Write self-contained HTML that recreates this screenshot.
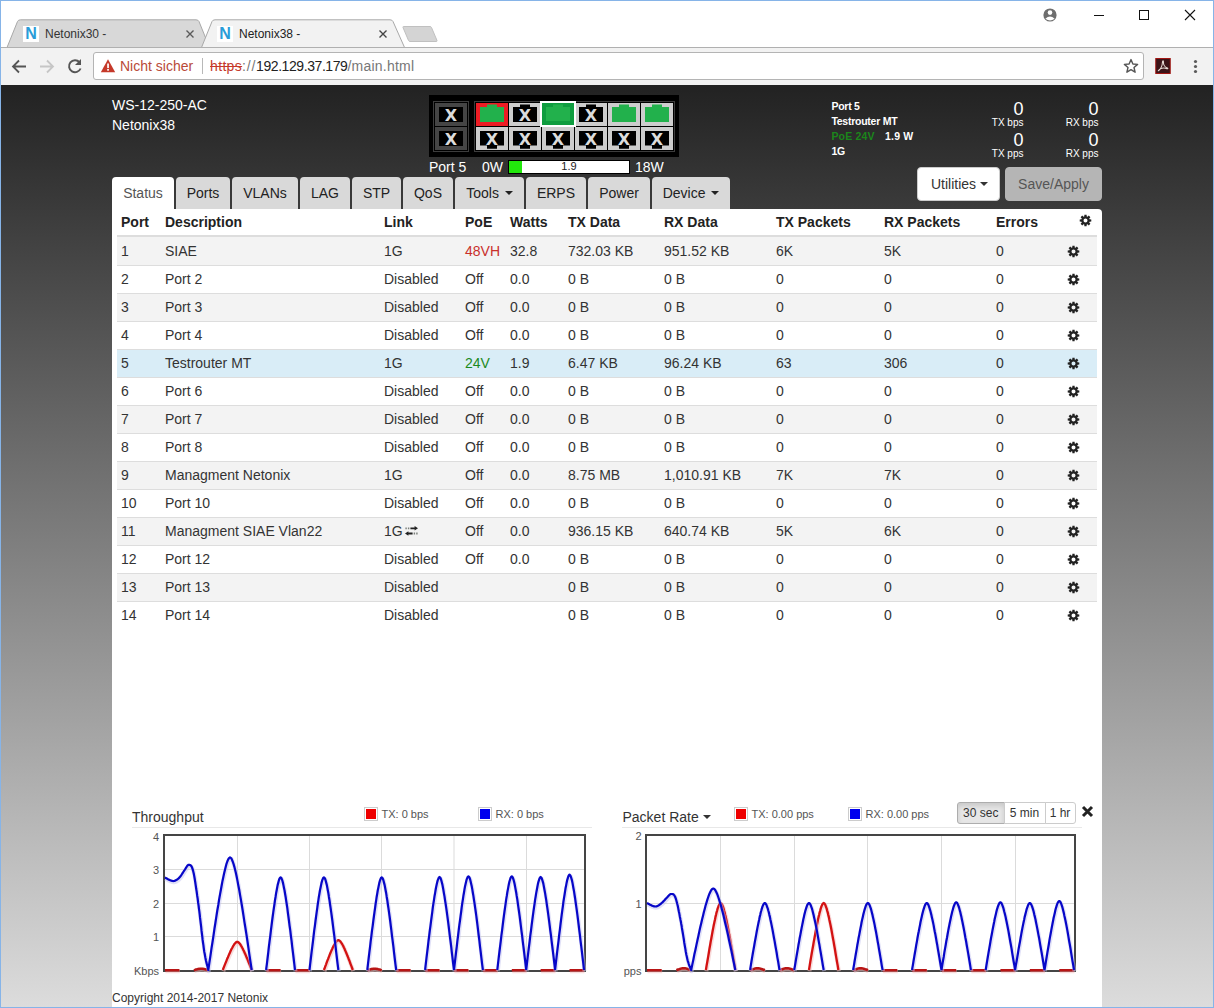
<!DOCTYPE html>
<html lang="de">
<head>
<meta charset="utf-8">
<title>Netonix38 -</title>
<style>
*{box-sizing:border-box}
html,body{margin:0;padding:0}
body{width:1214px;height:1008px;position:relative;overflow:hidden;background:#fff;font-family:"Liberation Sans",Arial,sans-serif;font-size:14px;color:#333}
.abs{position:absolute}
/* window frame */
#frame{position:absolute;left:0;top:0;width:1214px;height:1008px;border:1px solid #86b4e8;pointer-events:none;z-index:50}
/* browser chrome */
#titlebar{position:absolute;left:0;top:0;width:1214px;height:47px;background:#fff}
#toolbar{position:absolute;left:0;top:47px;width:1214px;height:38px;background:#f2f2f2;border-top:1px solid #b0b0b0}
.ctext{font-family:"Liberation Sans",sans-serif;font-size:12px;color:#222;white-space:nowrap}
#urlbox{position:absolute;left:93px;top:4px;width:1051px;height:28px;background:#fff;border:1px solid #b4b4b4;border-radius:3px}
/* page */
#page{position:absolute;left:1px;top:85px;width:1212px;height:922px;background:linear-gradient(to bottom,#222 0%,#dcdcdc 100%);overflow:hidden}
#cont{position:absolute;left:111px;top:123.5px;width:990.3px;height:800px;background:#fff;border-radius:0 4px 0 0}
.hd{color:#fff;white-space:nowrap}
.tab{position:absolute;top:91.6px;height:32.1px;background:#d9d9d9;border-radius:4px 4px 0 0;color:#222;font-size:14px;line-height:33.4px;text-align:center;white-space:nowrap}
.tab.act{background:#fff;color:#555}
.caret{display:inline-block;width:0;height:0;border-left:4px solid transparent;border-right:4px solid transparent;border-top:4px solid currentColor;vertical-align:middle;margin-left:2px;position:relative;top:-1px}
table{border-collapse:separate;border-spacing:0;position:absolute;left:5px;top:0.5px;width:980px;table-layout:fixed}
th,td{padding:0 4px;text-align:left;white-space:nowrap;overflow:visible;font-size:14px}
th{height:28px;line-height:26px;font-weight:bold;border-bottom:2px solid #ddd;vertical-align:top;color:#222}
td{height:28px;line-height:26px;border-top:1px solid #ddd;vertical-align:top;padding-bottom:1px}
tbody tr:first-child td{border-top:0;line-height:28px;padding-bottom:0}
tr.odd td{background:#f3f3f3}
tr.sel td{background:#d9edf7}
.gear{display:block;position:relative}
.num{position:absolute;color:#fff;text-align:right;white-space:nowrap}
.lg{position:absolute;width:14px;height:14px;border:1px solid #ccc;padding:1px;background:#fff}
.lg i{display:block;width:10px;height:10px}
.lgt{position:absolute;font-size:11px;color:#545454;white-space:nowrap;line-height:14px}
.axl{position:absolute;font-size:11px;color:#545454;text-align:right;white-space:nowrap;line-height:14px;width:40px}
.bx{position:absolute;top:717.3px;height:22px;border:1px solid #ccc;background:#fff;font-size:12px;line-height:20px;color:#333;text-align:center}
</style>
</head>
<body>
<!-- ================= BROWSER CHROME ================= -->
<div id="titlebar">
  <svg class="abs" style="left:0;top:0" width="1214" height="48" viewBox="0 0 1214 48">
    <!-- inactive tab -->
    <path d="M7 47.5 L17.5 21.5 Q18.3 19.8 20.5 19.8 L196 19.8 Q198.2 19.8 199 21.5 L209.5 47.5 Z" fill="#d8d8d8" stroke="#a8a8a8" stroke-width="1"/>
    <!-- active tab -->
    <path d="M201.5 47.5 L212 21.5 Q212.8 19.8 215 19.8 L390 19.8 Q392.2 19.8 393 21.5 L405 48.5 L201.5 48.5 Z" fill="#f2f2f2" stroke="#a8a8a8" stroke-width="1"/>
    <rect x="203" y="47" width="201" height="2" fill="#f2f2f2"/>
    <!-- new tab -->
    <path d="M403.5 26.5 L430 26.5 Q431 26.5 431.5 27.5 L437 40.5 Q437.3 41.5 436 41.5 L410 41.5 Q409 41.5 408.5 40.5 L403 27.5 Q402.7 26.5 403.5 26.5 Z" fill="#d4d4d4" stroke="#c0c0c0" stroke-width="1"/>
    <!-- favicons -->
    <rect x="23" y="26" width="16" height="16" fill="#fff"/>
    <rect x="217" y="26" width="16" height="16" fill="#fff"/>
    <!-- tab close x -->
    <path d="M186.5 30.5 L193.5 37.5 M193.5 30.5 L186.5 37.5" stroke="#5a5a5a" stroke-width="1.4" fill="none"/>
    <path d="M379.5 30.5 L386.5 37.5 M386.5 30.5 L379.5 37.5" stroke="#444" stroke-width="1.4" fill="none"/>
    <!-- user icon -->
    <circle cx="1050" cy="15" r="6.6" fill="#6e6e6e"/>
    <circle cx="1050" cy="12.6" r="2.3" fill="#fff"/>
    <path d="M1045.4 18.8 Q1050 14.4 1054.6 18.8 Q1050 22.4 1045.4 18.8 Z" fill="#fff"/>
    <!-- window controls -->
    <path d="M1094 15.5 L1104 15.5" stroke="#111" stroke-width="1"/>
    <rect x="1139.5" y="10.5" width="9" height="9" fill="none" stroke="#111" stroke-width="1"/>
    <path d="M1185 10 L1195 20 M1195 10 L1185 20" stroke="#111" stroke-width="1.1"/>
  </svg>
  <div class="abs" style="left:24px;top:25px;width:14px;font:bold 16px/18px 'Liberation Sans',sans-serif;color:#2a9cd8;text-align:center">N</div>
  <div class="abs" style="left:218px;top:25px;width:14px;font:bold 16px/18px 'Liberation Sans',sans-serif;color:#2a9cd8;text-align:center">N</div>
  <div class="abs ctext" style="left:45px;top:26px;line-height:16px;color:#333">Netonix30 -</div>
  <div class="abs ctext" style="left:239px;top:26px;line-height:16px;color:#222">Netonix38 -</div>
</div>
<div id="toolbar">
  <svg class="abs" style="left:0;top:0" width="94" height="37" viewBox="0 0 94 37">
    <!-- back -->
    <path d="M26 18.5 L13.5 18.5 M19 12.5 L13 18.5 L19 24.5" stroke="#555" stroke-width="1.8" fill="none"/>
    <!-- forward -->
    <path d="M40 18.5 L52.5 18.5 M47 12.5 L53 18.5 L47 24.5" stroke="#c6c6c6" stroke-width="1.8" fill="none"/>
    <!-- reload -->
    <path d="M79.5 14.2 A6 6 0 1 0 80.6 20.5" stroke="#555" stroke-width="1.9" fill="none"/>
    <path d="M81 11 L81 17 L75 17 Z" fill="#555"/>
  </svg>
  <div id="urlbox">
    <svg class="abs" style="left:6px;top:5px" width="16" height="16" viewBox="0 0 16 16"><path d="M8 1.2 L15.2 14.2 L0.8 14.2 Z" fill="#c5392a"/><rect x="7.2" y="5.5" width="1.7" height="4.6" fill="#fff"/><rect x="7.2" y="11" width="1.7" height="1.7" fill="#fff"/></svg>
    <div class="abs" style="left:26px;top:4px;font-size:14px;line-height:18px;color:#b94a38;white-space:nowrap">Nicht sicher</div>
    <div class="abs" style="left:108px;top:5px;width:1px;height:16px;background:#b8b8b8"></div>
    <div class="abs" style="left:116px;top:4px;font-size:14px;line-height:18px;white-space:nowrap;color:#222"><span style="color:#c5392a;text-decoration:line-through;letter-spacing:0.35px">https</span><span style="color:#777;letter-spacing:0.75px">://</span><span style="letter-spacing:-0.42px">192.129.37.179</span><span style="color:#777;letter-spacing:0.22px">/main.html</span></div>
    <svg class="abs" style="left:1029px;top:5px" width="16" height="16" viewBox="0 0 16 16"><path d="M8 1.6 L9.9 6 L14.6 6.4 L11 9.5 L12.1 14.2 L8 11.7 L3.9 14.2 L5 9.5 L1.4 6.4 L6.1 6 Z" fill="none" stroke="#555" stroke-width="1.4" stroke-linejoin="round"/></svg>
  </div>
  <svg class="abs" style="left:1155px;top:10px" width="16" height="16" viewBox="0 0 16 16.6"><rect x="0.5" y="0.5" width="15" height="15.6" fill="#3b1418" stroke="#a3130f" stroke-width="1"/><path d="M3.1 13.2 C5.4 11.6 7.3 7.6 7.5 3.8 C7.6 2.5 8.6 2.6 8.5 4 C8.3 6.6 9.8 9.3 12.5 10.3 C13.4 10.7 12.9 11.5 12 11.1 C10 10.3 7.3 10.3 5.2 11.3 C4.3 11.8 3.7 12.5 3.1 13.2 Z" fill="none" stroke="#e6dad4" stroke-width="1.1" stroke-linejoin="round"/></svg>
  <svg class="abs" style="left:1192px;top:10px" width="8" height="18" viewBox="0 0 8 18"><circle cx="3.5" cy="3.5" r="1.6" fill="#5a5a5a"/><circle cx="3.5" cy="8.5" r="1.6" fill="#5a5a5a"/><circle cx="3.5" cy="13.5" r="1.6" fill="#5a5a5a"/></svg>
</div>
<!-- ================= PAGE ================= -->
<div id="page">
<div class="abs hd" style="left:111px;top:10px;line-height:20px;font-size:14px">WS-12-250-AC<br>Netonix38</div>
<svg class="abs" style="left:428px;top:10px;font-family:DejaVu Sans,Liberation Sans,sans-serif;font-weight:bold;font-size:16px" width="250" height="62" viewBox="0 0 250 62" text-anchor="middle">
<rect x="0" y="0" width="250" height="62" fill="#000"/>
<rect x="4.5" y="6.5" width="35" height="50" fill="none" stroke="#3c3c3c"/>
<rect x="45.5" y="6.5" width="200" height="50" fill="none" stroke="#3c3c3c"/>
<rect x="6" y="8" width="32" height="23" fill="#454545"/>
<rect x="10" y="12" width="24" height="15" fill="#000"/>
<text x="22" y="25.7" fill="#dcdcdc">X</text>
<rect x="6" y="32" width="32" height="23" fill="#454545"/>
<rect x="10" y="36" width="24" height="15" fill="#000"/>
<text x="22" y="49.7" fill="#dcdcdc">X</text>
<rect x="47" y="8" width="32" height="23" fill="#ed1c24"/>
<path d="M51 12 H58 V9.4 H68 V12 H75 V27 H51 Z" fill="#22b14c"/>
<rect x="80" y="8" width="32" height="23" fill="#cdcdcd"/>
<path d="M84 12 H91 V9.4 H101 V12 H108 V27 H84 Z" fill="#000"/>
<text x="96" y="25.7" fill="#dcdcdc">X</text>
<rect x="146" y="8" width="32" height="23" fill="#cdcdcd"/>
<path d="M150 12 H157 V9.4 H167 V12 H174 V27 H150 Z" fill="#000"/>
<text x="162" y="25.7" fill="#dcdcdc">X</text>
<rect x="179" y="8" width="32" height="23" fill="#cdcdcd"/>
<path d="M183 12 H190 V9.4 H200 V12 H207 V27 H183 Z" fill="#22b14c"/>
<rect x="212" y="8" width="32" height="23" fill="#cdcdcd"/>
<path d="M216 12 H223 V9.4 H233 V12 H240 V27 H216 Z" fill="#22b14c"/>
<rect x="47" y="32" width="32" height="23" fill="#cdcdcd"/>
<path d="M51 36 H75 V50.6 H68 V53.8 H58 V50.6 H51 Z" fill="#000"/>
<text x="63" y="49.7" fill="#dcdcdc">X</text>
<rect x="80" y="32" width="32" height="23" fill="#cdcdcd"/>
<path d="M84 36 H108 V50.6 H101 V53.8 H91 V50.6 H84 Z" fill="#000"/>
<text x="96" y="49.7" fill="#dcdcdc">X</text>
<rect x="113" y="32" width="32" height="23" fill="#cdcdcd"/>
<path d="M117 36 H141 V50.6 H134 V53.8 H124 V50.6 H117 Z" fill="#000"/>
<text x="129" y="49.7" fill="#dcdcdc">X</text>
<rect x="146" y="32" width="32" height="23" fill="#cdcdcd"/>
<path d="M150 36 H174 V50.6 H167 V53.8 H157 V50.6 H150 Z" fill="#000"/>
<text x="162" y="49.7" fill="#dcdcdc">X</text>
<rect x="179" y="32" width="32" height="23" fill="#cdcdcd"/>
<path d="M183 36 H207 V50.6 H200 V53.8 H190 V50.6 H183 Z" fill="#000"/>
<text x="195" y="49.7" fill="#dcdcdc">X</text>
<rect x="212" y="32" width="32" height="23" fill="#cdcdcd"/>
<path d="M216 36 H240 V50.6 H233 V53.8 H223 V50.6 H216 Z" fill="#000"/>
<text x="228" y="49.7" fill="#dcdcdc">X</text>
<rect x="111" y="6" width="36" height="26" fill="#fff"/>
<rect x="113" y="8" width="32" height="22" fill="#0f9d3f"/>
<path d="M117 12 H124 V9.6 H134 V12 H141 V26 H117 Z" fill="#22b14c"/>
</svg>
<div class="abs hd" style="left:428px;top:72px;line-height:20px">Port 5</div>
<div class="abs hd" style="left:481px;top:72px;line-height:20px">0W</div>
<div class="abs" style="left:507px;top:75px;width:122px;height:14px;background:#fff;border:1px solid #000"><div class="abs" style="left:0;top:0;width:13px;height:12px;background:#22e80c"></div><div class="abs" style="left:0;top:0;width:120px;text-align:center;font-size:11px;line-height:11px;color:#222">1.9</div></div>
<div class="abs hd" style="left:634px;top:72px;line-height:20px">18W</div>
<div class="abs hd" style="left:830.4px;top:14px;font-size:10.5px;line-height:15px;font-weight:bold;letter-spacing:-0.25px">Port 5<br>Testrouter MT<br><span style="letter-spacing:0.2px"><span style="color:#1b861b">PoE 24V</span><span style="margin-left:10.2px">1.9 W</span></span><br>1G</div>
<div class="num" style="left:942.5px;width:80px;top:13.8px;font-size:18px;line-height:20px">0</div>
<div class="num" style="left:942.5px;width:80px;top:32px;font-size:10px;line-height:12px">TX bps</div>
<div class="num" style="left:942.5px;width:80px;top:44.8px;font-size:18px;line-height:20px">0</div>
<div class="num" style="left:942.5px;width:80px;top:63px;font-size:10px;line-height:12px">TX pps</div>
<div class="num" style="left:1017.5px;width:80px;top:13.8px;font-size:18px;line-height:20px">0</div>
<div class="num" style="left:1017.5px;width:80px;top:32px;font-size:10px;line-height:12px">RX bps</div>
<div class="num" style="left:1017.5px;width:80px;top:44.8px;font-size:18px;line-height:20px">0</div>
<div class="num" style="left:1017.5px;width:80px;top:63px;font-size:10px;line-height:12px">RX pps</div>
<div class="abs" style="left:916px;top:82px;width:83px;height:34px;background:#fff;border:1px solid #ccc;border-radius:4px;text-align:center;line-height:32px;color:#333;font-size:14px;padding-left:2px">Utilities <span class="caret" style="margin-left:0"></span></div>
<div class="abs" style="left:1004px;top:82px;width:97px;height:34px;background:#b5b5b5;border:1px solid #b5b5b5;border-radius:4px;text-align:center;line-height:32px;color:#555;font-size:14px">Save/Apply</div>
<div class="tab act" style="left:111px;width:62px">Status</div>
<div class="tab" style="left:175px;width:54px">Ports</div>
<div class="tab" style="left:231px;width:66px">VLANs</div>
<div class="tab" style="left:299px;width:50px">LAG</div>
<div class="tab" style="left:351px;width:49px">STP</div>
<div class="tab" style="left:402px;width:50px">QoS</div>
<div class="tab" style="left:454px;width:69px">Tools <span class="caret"></span></div>
<div class="tab" style="left:524.8px;width:60.4px">ERPS</div>
<div class="tab" style="left:587px;width:62px">Power</div>
<div class="tab" style="left:651px;width:78px">Device <span class="caret"></span></div>
<div id="cont">
<table><colgroup><col style="width:44px"><col style="width:219px"><col style="width:81px"><col style="width:45px"><col style="width:58px"><col style="width:96px"><col style="width:112px"><col style="width:108px"><col style="width:112px"><col style="width:71px"><col style="width:34px"></colgroup>
<thead><tr><th>Port</th><th>Description</th><th>Link</th><th>PoE</th><th>Watts</th><th>TX Data</th><th>RX Data</th><th>TX Packets</th><th>RX Packets</th><th>Errors</th><th style="padding:0"><svg class="gear" width="13" height="13" viewBox="-6.5 -6.5 13 13" style="left:16.3px;top:5.1px"><path d="M4.01 -1.24 L5.79 -1.11 L5.79 1.11 L4.01 1.24 L3.71 1.96 L4.88 3.31 L3.31 4.88 L1.96 3.71 L1.24 4.01 L1.11 5.79 L-1.11 5.79 L-1.24 4.01 L-1.96 3.71 L-3.31 4.88 L-4.88 3.31 L-3.71 1.96 L-4.01 1.24 L-5.79 1.11 L-5.79 -1.11 L-4.01 -1.24 L-3.71 -1.96 L-4.88 -3.31 L-3.31 -4.88 L-1.96 -3.71 L-1.24 -4.01 L-1.11 -5.79 L1.11 -5.79 L1.24 -4.01 L1.96 -3.71 L3.31 -4.88 L4.88 -3.31 L3.71 -1.96 Z M2.00 0 A2.00 2.00 0 1 0 -2.00 0 A2.00 2.00 0 1 0 2.00 0 Z" fill="#222" fill-rule="evenodd"/></svg></th></tr></thead>
<tbody>
<tr class="odd"><td>1</td><td>SIAE</td><td>1G</td><td><span style="color:#c9302c">48VH</span></td><td>32.8</td><td>732.03 KB</td><td>951.52 KB</td><td>6K</td><td>5K</td><td>0</td><td style="padding:0"><svg class="gear" width="13" height="13" viewBox="-6.5 -6.5 13 13" style="left:3.75px;top:7.5px"><path d="M4.01 -1.24 L5.79 -1.11 L5.79 1.11 L4.01 1.24 L3.71 1.96 L4.88 3.31 L3.31 4.88 L1.96 3.71 L1.24 4.01 L1.11 5.79 L-1.11 5.79 L-1.24 4.01 L-1.96 3.71 L-3.31 4.88 L-4.88 3.31 L-3.71 1.96 L-4.01 1.24 L-5.79 1.11 L-5.79 -1.11 L-4.01 -1.24 L-3.71 -1.96 L-4.88 -3.31 L-3.31 -4.88 L-1.96 -3.71 L-1.24 -4.01 L-1.11 -5.79 L1.11 -5.79 L1.24 -4.01 L1.96 -3.71 L3.31 -4.88 L4.88 -3.31 L3.71 -1.96 Z M2.00 0 A2.00 2.00 0 1 0 -2.00 0 A2.00 2.00 0 1 0 2.00 0 Z" fill="#222" fill-rule="evenodd"/></svg></td></tr>
<tr class=""><td>2</td><td>Port 2</td><td>Disabled</td><td>Off</td><td>0.0</td><td>0 B</td><td>0 B</td><td>0</td><td>0</td><td>0</td><td style="padding:0"><svg class="gear" width="13" height="13" viewBox="-6.5 -6.5 13 13" style="left:3.75px;top:6.5px"><path d="M4.01 -1.24 L5.79 -1.11 L5.79 1.11 L4.01 1.24 L3.71 1.96 L4.88 3.31 L3.31 4.88 L1.96 3.71 L1.24 4.01 L1.11 5.79 L-1.11 5.79 L-1.24 4.01 L-1.96 3.71 L-3.31 4.88 L-4.88 3.31 L-3.71 1.96 L-4.01 1.24 L-5.79 1.11 L-5.79 -1.11 L-4.01 -1.24 L-3.71 -1.96 L-4.88 -3.31 L-3.31 -4.88 L-1.96 -3.71 L-1.24 -4.01 L-1.11 -5.79 L1.11 -5.79 L1.24 -4.01 L1.96 -3.71 L3.31 -4.88 L4.88 -3.31 L3.71 -1.96 Z M2.00 0 A2.00 2.00 0 1 0 -2.00 0 A2.00 2.00 0 1 0 2.00 0 Z" fill="#222" fill-rule="evenodd"/></svg></td></tr>
<tr class="odd"><td>3</td><td>Port 3</td><td>Disabled</td><td>Off</td><td>0.0</td><td>0 B</td><td>0 B</td><td>0</td><td>0</td><td>0</td><td style="padding:0"><svg class="gear" width="13" height="13" viewBox="-6.5 -6.5 13 13" style="left:3.75px;top:6.5px"><path d="M4.01 -1.24 L5.79 -1.11 L5.79 1.11 L4.01 1.24 L3.71 1.96 L4.88 3.31 L3.31 4.88 L1.96 3.71 L1.24 4.01 L1.11 5.79 L-1.11 5.79 L-1.24 4.01 L-1.96 3.71 L-3.31 4.88 L-4.88 3.31 L-3.71 1.96 L-4.01 1.24 L-5.79 1.11 L-5.79 -1.11 L-4.01 -1.24 L-3.71 -1.96 L-4.88 -3.31 L-3.31 -4.88 L-1.96 -3.71 L-1.24 -4.01 L-1.11 -5.79 L1.11 -5.79 L1.24 -4.01 L1.96 -3.71 L3.31 -4.88 L4.88 -3.31 L3.71 -1.96 Z M2.00 0 A2.00 2.00 0 1 0 -2.00 0 A2.00 2.00 0 1 0 2.00 0 Z" fill="#222" fill-rule="evenodd"/></svg></td></tr>
<tr class=""><td>4</td><td>Port 4</td><td>Disabled</td><td>Off</td><td>0.0</td><td>0 B</td><td>0 B</td><td>0</td><td>0</td><td>0</td><td style="padding:0"><svg class="gear" width="13" height="13" viewBox="-6.5 -6.5 13 13" style="left:3.75px;top:6.5px"><path d="M4.01 -1.24 L5.79 -1.11 L5.79 1.11 L4.01 1.24 L3.71 1.96 L4.88 3.31 L3.31 4.88 L1.96 3.71 L1.24 4.01 L1.11 5.79 L-1.11 5.79 L-1.24 4.01 L-1.96 3.71 L-3.31 4.88 L-4.88 3.31 L-3.71 1.96 L-4.01 1.24 L-5.79 1.11 L-5.79 -1.11 L-4.01 -1.24 L-3.71 -1.96 L-4.88 -3.31 L-3.31 -4.88 L-1.96 -3.71 L-1.24 -4.01 L-1.11 -5.79 L1.11 -5.79 L1.24 -4.01 L1.96 -3.71 L3.31 -4.88 L4.88 -3.31 L3.71 -1.96 Z M2.00 0 A2.00 2.00 0 1 0 -2.00 0 A2.00 2.00 0 1 0 2.00 0 Z" fill="#222" fill-rule="evenodd"/></svg></td></tr>
<tr class="sel"><td>5</td><td>Testrouter MT</td><td>1G</td><td><span style="color:#1c8a1c">24V</span></td><td>1.9</td><td>6.47 KB</td><td>96.24 KB</td><td>63</td><td>306</td><td>0</td><td style="padding:0"><svg class="gear" width="13" height="13" viewBox="-6.5 -6.5 13 13" style="left:3.75px;top:6.5px"><path d="M4.01 -1.24 L5.79 -1.11 L5.79 1.11 L4.01 1.24 L3.71 1.96 L4.88 3.31 L3.31 4.88 L1.96 3.71 L1.24 4.01 L1.11 5.79 L-1.11 5.79 L-1.24 4.01 L-1.96 3.71 L-3.31 4.88 L-4.88 3.31 L-3.71 1.96 L-4.01 1.24 L-5.79 1.11 L-5.79 -1.11 L-4.01 -1.24 L-3.71 -1.96 L-4.88 -3.31 L-3.31 -4.88 L-1.96 -3.71 L-1.24 -4.01 L-1.11 -5.79 L1.11 -5.79 L1.24 -4.01 L1.96 -3.71 L3.31 -4.88 L4.88 -3.31 L3.71 -1.96 Z M2.00 0 A2.00 2.00 0 1 0 -2.00 0 A2.00 2.00 0 1 0 2.00 0 Z" fill="#222" fill-rule="evenodd"/></svg></td></tr>
<tr class=""><td>6</td><td>Port 6</td><td>Disabled</td><td>Off</td><td>0.0</td><td>0 B</td><td>0 B</td><td>0</td><td>0</td><td>0</td><td style="padding:0"><svg class="gear" width="13" height="13" viewBox="-6.5 -6.5 13 13" style="left:3.75px;top:6.5px"><path d="M4.01 -1.24 L5.79 -1.11 L5.79 1.11 L4.01 1.24 L3.71 1.96 L4.88 3.31 L3.31 4.88 L1.96 3.71 L1.24 4.01 L1.11 5.79 L-1.11 5.79 L-1.24 4.01 L-1.96 3.71 L-3.31 4.88 L-4.88 3.31 L-3.71 1.96 L-4.01 1.24 L-5.79 1.11 L-5.79 -1.11 L-4.01 -1.24 L-3.71 -1.96 L-4.88 -3.31 L-3.31 -4.88 L-1.96 -3.71 L-1.24 -4.01 L-1.11 -5.79 L1.11 -5.79 L1.24 -4.01 L1.96 -3.71 L3.31 -4.88 L4.88 -3.31 L3.71 -1.96 Z M2.00 0 A2.00 2.00 0 1 0 -2.00 0 A2.00 2.00 0 1 0 2.00 0 Z" fill="#222" fill-rule="evenodd"/></svg></td></tr>
<tr class="odd"><td>7</td><td>Port 7</td><td>Disabled</td><td>Off</td><td>0.0</td><td>0 B</td><td>0 B</td><td>0</td><td>0</td><td>0</td><td style="padding:0"><svg class="gear" width="13" height="13" viewBox="-6.5 -6.5 13 13" style="left:3.75px;top:6.5px"><path d="M4.01 -1.24 L5.79 -1.11 L5.79 1.11 L4.01 1.24 L3.71 1.96 L4.88 3.31 L3.31 4.88 L1.96 3.71 L1.24 4.01 L1.11 5.79 L-1.11 5.79 L-1.24 4.01 L-1.96 3.71 L-3.31 4.88 L-4.88 3.31 L-3.71 1.96 L-4.01 1.24 L-5.79 1.11 L-5.79 -1.11 L-4.01 -1.24 L-3.71 -1.96 L-4.88 -3.31 L-3.31 -4.88 L-1.96 -3.71 L-1.24 -4.01 L-1.11 -5.79 L1.11 -5.79 L1.24 -4.01 L1.96 -3.71 L3.31 -4.88 L4.88 -3.31 L3.71 -1.96 Z M2.00 0 A2.00 2.00 0 1 0 -2.00 0 A2.00 2.00 0 1 0 2.00 0 Z" fill="#222" fill-rule="evenodd"/></svg></td></tr>
<tr class=""><td>8</td><td>Port 8</td><td>Disabled</td><td>Off</td><td>0.0</td><td>0 B</td><td>0 B</td><td>0</td><td>0</td><td>0</td><td style="padding:0"><svg class="gear" width="13" height="13" viewBox="-6.5 -6.5 13 13" style="left:3.75px;top:6.5px"><path d="M4.01 -1.24 L5.79 -1.11 L5.79 1.11 L4.01 1.24 L3.71 1.96 L4.88 3.31 L3.31 4.88 L1.96 3.71 L1.24 4.01 L1.11 5.79 L-1.11 5.79 L-1.24 4.01 L-1.96 3.71 L-3.31 4.88 L-4.88 3.31 L-3.71 1.96 L-4.01 1.24 L-5.79 1.11 L-5.79 -1.11 L-4.01 -1.24 L-3.71 -1.96 L-4.88 -3.31 L-3.31 -4.88 L-1.96 -3.71 L-1.24 -4.01 L-1.11 -5.79 L1.11 -5.79 L1.24 -4.01 L1.96 -3.71 L3.31 -4.88 L4.88 -3.31 L3.71 -1.96 Z M2.00 0 A2.00 2.00 0 1 0 -2.00 0 A2.00 2.00 0 1 0 2.00 0 Z" fill="#222" fill-rule="evenodd"/></svg></td></tr>
<tr class="odd"><td>9</td><td>Managment Netonix</td><td>1G</td><td>Off</td><td>0.0</td><td>8.75 MB</td><td>1,010.91 KB</td><td>7K</td><td>7K</td><td>0</td><td style="padding:0"><svg class="gear" width="13" height="13" viewBox="-6.5 -6.5 13 13" style="left:3.75px;top:6.5px"><path d="M4.01 -1.24 L5.79 -1.11 L5.79 1.11 L4.01 1.24 L3.71 1.96 L4.88 3.31 L3.31 4.88 L1.96 3.71 L1.24 4.01 L1.11 5.79 L-1.11 5.79 L-1.24 4.01 L-1.96 3.71 L-3.31 4.88 L-4.88 3.31 L-3.71 1.96 L-4.01 1.24 L-5.79 1.11 L-5.79 -1.11 L-4.01 -1.24 L-3.71 -1.96 L-4.88 -3.31 L-3.31 -4.88 L-1.96 -3.71 L-1.24 -4.01 L-1.11 -5.79 L1.11 -5.79 L1.24 -4.01 L1.96 -3.71 L3.31 -4.88 L4.88 -3.31 L3.71 -1.96 Z M2.00 0 A2.00 2.00 0 1 0 -2.00 0 A2.00 2.00 0 1 0 2.00 0 Z" fill="#222" fill-rule="evenodd"/></svg></td></tr>
<tr class=""><td>10</td><td>Port 10</td><td>Disabled</td><td>Off</td><td>0.0</td><td>0 B</td><td>0 B</td><td>0</td><td>0</td><td>0</td><td style="padding:0"><svg class="gear" width="13" height="13" viewBox="-6.5 -6.5 13 13" style="left:3.75px;top:6.5px"><path d="M4.01 -1.24 L5.79 -1.11 L5.79 1.11 L4.01 1.24 L3.71 1.96 L4.88 3.31 L3.31 4.88 L1.96 3.71 L1.24 4.01 L1.11 5.79 L-1.11 5.79 L-1.24 4.01 L-1.96 3.71 L-3.31 4.88 L-4.88 3.31 L-3.71 1.96 L-4.01 1.24 L-5.79 1.11 L-5.79 -1.11 L-4.01 -1.24 L-3.71 -1.96 L-4.88 -3.31 L-3.31 -4.88 L-1.96 -3.71 L-1.24 -4.01 L-1.11 -5.79 L1.11 -5.79 L1.24 -4.01 L1.96 -3.71 L3.31 -4.88 L4.88 -3.31 L3.71 -1.96 Z M2.00 0 A2.00 2.00 0 1 0 -2.00 0 A2.00 2.00 0 1 0 2.00 0 Z" fill="#222" fill-rule="evenodd"/></svg></td></tr>
<tr class="odd"><td>11</td><td>Managment SIAE Vlan22</td><td>1G<svg width="13" height="10" viewBox="0 0 13 10" style="display:inline-block;vertical-align:baseline;margin-left:2px;position:relative;top:-0.4px"><path d="M5.4 1.4 H9.6 V0 L13 2.3 L9.6 4.6 V3.2 H5.4 Z M7.6 6.6 H3.4 V5.2 L0 7.5 L3.4 9.8 V8.4 H7.6 Z" fill="#222"/><path d="M0.4 1.4 h1.4 v1.8 h-1.4 Z M2.9 1.4 h1.4 v1.8 h-1.4 Z M8.7 6.6 h1.4 v1.8 h-1.4 Z M11.2 6.6 h1.4 v1.8 h-1.4 Z" fill="#7a7f7a"/></svg></td><td>Off</td><td>0.0</td><td>936.15 KB</td><td>640.74 KB</td><td>5K</td><td>6K</td><td>0</td><td style="padding:0"><svg class="gear" width="13" height="13" viewBox="-6.5 -6.5 13 13" style="left:3.75px;top:6.5px"><path d="M4.01 -1.24 L5.79 -1.11 L5.79 1.11 L4.01 1.24 L3.71 1.96 L4.88 3.31 L3.31 4.88 L1.96 3.71 L1.24 4.01 L1.11 5.79 L-1.11 5.79 L-1.24 4.01 L-1.96 3.71 L-3.31 4.88 L-4.88 3.31 L-3.71 1.96 L-4.01 1.24 L-5.79 1.11 L-5.79 -1.11 L-4.01 -1.24 L-3.71 -1.96 L-4.88 -3.31 L-3.31 -4.88 L-1.96 -3.71 L-1.24 -4.01 L-1.11 -5.79 L1.11 -5.79 L1.24 -4.01 L1.96 -3.71 L3.31 -4.88 L4.88 -3.31 L3.71 -1.96 Z M2.00 0 A2.00 2.00 0 1 0 -2.00 0 A2.00 2.00 0 1 0 2.00 0 Z" fill="#222" fill-rule="evenodd"/></svg></td></tr>
<tr class=""><td>12</td><td>Port 12</td><td>Disabled</td><td>Off</td><td>0.0</td><td>0 B</td><td>0 B</td><td>0</td><td>0</td><td>0</td><td style="padding:0"><svg class="gear" width="13" height="13" viewBox="-6.5 -6.5 13 13" style="left:3.75px;top:6.5px"><path d="M4.01 -1.24 L5.79 -1.11 L5.79 1.11 L4.01 1.24 L3.71 1.96 L4.88 3.31 L3.31 4.88 L1.96 3.71 L1.24 4.01 L1.11 5.79 L-1.11 5.79 L-1.24 4.01 L-1.96 3.71 L-3.31 4.88 L-4.88 3.31 L-3.71 1.96 L-4.01 1.24 L-5.79 1.11 L-5.79 -1.11 L-4.01 -1.24 L-3.71 -1.96 L-4.88 -3.31 L-3.31 -4.88 L-1.96 -3.71 L-1.24 -4.01 L-1.11 -5.79 L1.11 -5.79 L1.24 -4.01 L1.96 -3.71 L3.31 -4.88 L4.88 -3.31 L3.71 -1.96 Z M2.00 0 A2.00 2.00 0 1 0 -2.00 0 A2.00 2.00 0 1 0 2.00 0 Z" fill="#222" fill-rule="evenodd"/></svg></td></tr>
<tr class="odd"><td>13</td><td>Port 13</td><td>Disabled</td><td></td><td></td><td>0 B</td><td>0 B</td><td>0</td><td>0</td><td>0</td><td style="padding:0"><svg class="gear" width="13" height="13" viewBox="-6.5 -6.5 13 13" style="left:3.75px;top:6.5px"><path d="M4.01 -1.24 L5.79 -1.11 L5.79 1.11 L4.01 1.24 L3.71 1.96 L4.88 3.31 L3.31 4.88 L1.96 3.71 L1.24 4.01 L1.11 5.79 L-1.11 5.79 L-1.24 4.01 L-1.96 3.71 L-3.31 4.88 L-4.88 3.31 L-3.71 1.96 L-4.01 1.24 L-5.79 1.11 L-5.79 -1.11 L-4.01 -1.24 L-3.71 -1.96 L-4.88 -3.31 L-3.31 -4.88 L-1.96 -3.71 L-1.24 -4.01 L-1.11 -5.79 L1.11 -5.79 L1.24 -4.01 L1.96 -3.71 L3.31 -4.88 L4.88 -3.31 L3.71 -1.96 Z M2.00 0 A2.00 2.00 0 1 0 -2.00 0 A2.00 2.00 0 1 0 2.00 0 Z" fill="#222" fill-rule="evenodd"/></svg></td></tr>
<tr class=""><td>14</td><td>Port 14</td><td>Disabled</td><td></td><td></td><td>0 B</td><td>0 B</td><td>0</td><td>0</td><td>0</td><td style="padding:0"><svg class="gear" width="13" height="13" viewBox="-6.5 -6.5 13 13" style="left:3.75px;top:6.5px"><path d="M4.01 -1.24 L5.79 -1.11 L5.79 1.11 L4.01 1.24 L3.71 1.96 L4.88 3.31 L3.31 4.88 L1.96 3.71 L1.24 4.01 L1.11 5.79 L-1.11 5.79 L-1.24 4.01 L-1.96 3.71 L-3.31 4.88 L-4.88 3.31 L-3.71 1.96 L-4.01 1.24 L-5.79 1.11 L-5.79 -1.11 L-4.01 -1.24 L-3.71 -1.96 L-4.88 -3.31 L-3.31 -4.88 L-1.96 -3.71 L-1.24 -4.01 L-1.11 -5.79 L1.11 -5.79 L1.24 -4.01 L1.96 -3.71 L3.31 -4.88 L4.88 -3.31 L3.71 -1.96 Z M2.00 0 A2.00 2.00 0 1 0 -2.00 0 A2.00 2.00 0 1 0 2.00 0 Z" fill="#222" fill-rule="evenodd"/></svg></td></tr>
</tbody></table>
</div>
<div class="abs" style="left:131px;top:722px;font-size:14px;line-height:20px;color:#333">Throughput</div>
<div class="abs" style="left:131px;top:742px;width:460px;height:1px;background:#e8e8e8"></div>
<div class="lg" style="left:363px;top:722px"><i style="background:#ee0000"></i></div><div class="lgt" style="left:380.5px;top:722px">TX: 0 bps</div>
<div class="lg" style="left:477px;top:722px"><i style="background:#0000ee"></i></div><div class="lgt" style="left:494.5px;top:722px">RX: 0 bps</div>
<div class="axl" style="left:118px;top:744.6px">4</div>
<div class="axl" style="left:118px;top:778px">3</div>
<div class="axl" style="left:118px;top:811.5px">2</div>
<div class="axl" style="left:118px;top:845px">1</div>
<div class="axl" style="left:118px;top:878.5px">Kbps</div>
<svg class="abs" style="left:159px;top:745px" width="440" height="150" viewBox="0 0 440 150">
<line x1="77.5" y1="6" x2="77.5" y2="140" stroke="#dbdbdb" stroke-width="1"/>
<line x1="149.5" y1="6" x2="149.5" y2="140" stroke="#dbdbdb" stroke-width="1"/>
<line x1="221.5" y1="6" x2="221.5" y2="140" stroke="#dbdbdb" stroke-width="1"/>
<line x1="294.0" y1="6" x2="294.0" y2="140" stroke="#dbdbdb" stroke-width="1"/>
<line x1="366.5" y1="6" x2="366.5" y2="140" stroke="#dbdbdb" stroke-width="1"/>
<line x1="5" y1="106.5" x2="424" y2="106.5" stroke="#dbdbdb" stroke-width="1"/>
<line x1="5" y1="73.5" x2="424" y2="73.5" stroke="#dbdbdb" stroke-width="1"/>
<line x1="5" y1="39.5" x2="424" y2="39.5" stroke="#dbdbdb" stroke-width="1"/>
<rect x="4" y="5" width="421" height="136" fill="none" stroke="#454545" stroke-width="2"/>
<path d="M5.0 140.0 L19.4 140.0 M106.1 140.0 L120.6 140.0 M135.0 140.0 L149.5 140.0 M236.2 140.0 L250.6 140.0 M265.1 140.0 L279.5 140.0 M294.0 140.0 L308.4 140.0 M322.9 140.0 L337.3 140.0 M351.8 140.0 L366.2 140.0 M380.6 140.0 L395.1 140.0 M409.5 140.0 L424.0 140.0 M33.9 140.0 L34.8 139.7 L35.6 139.4 L36.5 139.2 L37.3 139.0 L38.1 138.8 L39.0 138.7 L39.9 138.5 L41.1 138.5 L42.4 138.5 L43.3 138.7 L44.1 138.8 L45.0 139.0 L45.8 139.2 L46.6 139.4 L47.5 139.7 L48.3 140.0 M207.3 140.0 L208.2 139.7 L209.0 139.4 L209.8 139.2 L210.6 139.0 L211.5 138.8 L212.3 138.7 L213.3 138.5 L214.5 138.5 L215.7 138.5 L216.7 138.7 L217.5 138.8 L218.3 139.0 L219.2 139.2 L220.0 139.4 L220.8 139.7 L221.7 140.0" fill="none" stroke="#f3c0c0" stroke-width="4" transform="translate(0.5 1.2)" opacity="0.55"/>
<path d="M5.0 140.0 L19.4 140.0 M106.1 140.0 L120.6 140.0 M135.0 140.0 L149.5 140.0 M236.2 140.0 L250.6 140.0 M265.1 140.0 L279.5 140.0 M294.0 140.0 L308.4 140.0 M322.9 140.0 L337.3 140.0 M351.8 140.0 L366.2 140.0 M380.6 140.0 L395.1 140.0 M409.5 140.0 L424.0 140.0 M33.9 140.0 L34.8 139.7 L35.6 139.4 L36.5 139.2 L37.3 139.0 L38.1 138.8 L39.0 138.7 L39.9 138.5 L41.1 138.5 L42.4 138.5 L43.3 138.7 L44.1 138.8 L45.0 139.0 L45.8 139.2 L46.6 139.4 L47.5 139.7 L48.3 140.0 M207.3 140.0 L208.2 139.7 L209.0 139.4 L209.8 139.2 L210.6 139.0 L211.5 138.8 L212.3 138.7 L213.3 138.5 L214.5 138.5 L215.7 138.5 L216.7 138.7 L217.5 138.8 L218.3 139.0 L219.2 139.2 L220.0 139.4 L220.8 139.7 L221.7 140.0" fill="none" stroke="#b81515" stroke-width="2.6" stroke-linejoin="round" transform="translate(0 0.2)"/>
<path d="M62.8 140.0 L63.5 138.1 L64.2 136.3 L64.9 134.6 L65.6 132.9 L66.3 131.2 L66.9 129.6 L67.6 128.1 L68.2 126.6 L68.8 125.1 L69.4 123.7 L70.0 122.4 L70.6 121.1 L71.1 119.9 L71.7 118.8 L72.3 117.7 L72.8 116.7 L73.3 115.8 L73.9 114.9 L74.4 114.1 L74.9 113.5 L75.5 112.9 L76.0 112.4 L76.5 112.0 L77.2 111.9 L77.9 112.0 L78.5 112.4 L79.0 112.9 L79.6 113.5 L80.1 114.1 L80.6 114.9 L81.1 115.8 L81.7 116.7 L82.2 117.7 L82.8 118.8 L83.3 119.9 L83.9 121.1 L84.5 122.4 L85.1 123.7 L85.7 125.1 L86.3 126.6 L86.9 128.1 L87.6 129.6 L88.2 131.2 L88.9 132.9 L89.6 134.6 L90.3 136.3 L91.0 138.1 L91.7 140.0 M163.9 140.0 L164.7 138.0 L165.4 136.1 L166.1 134.3 L166.7 132.5 L167.4 130.7 L168.1 129.0 L168.7 127.4 L169.3 125.8 L169.9 124.2 L170.5 122.8 L171.1 121.4 L171.7 120.0 L172.3 118.7 L172.8 117.5 L173.4 116.4 L173.9 115.3 L174.5 114.3 L175.0 113.4 L175.5 112.6 L176.1 111.9 L176.6 111.3 L177.1 110.7 L177.7 110.4 L178.4 110.2 L179.1 110.4 L179.6 110.7 L180.2 111.3 L180.7 111.9 L181.2 112.6 L181.7 113.4 L182.3 114.3 L182.8 115.3 L183.4 116.4 L183.9 117.5 L184.5 118.7 L185.0 120.0 L185.6 121.4 L186.2 122.8 L186.8 124.2 L187.4 125.8 L188.1 127.4 L188.7 129.0 L189.4 130.7 L190.0 132.5 L190.7 134.3 L191.4 136.1 L192.1 138.0 L192.8 140.0" fill="none" stroke="#f3c0c0" stroke-width="4" transform="translate(0.5 1.2)" opacity="0.55"/>
<path d="M62.8 140.0 L63.5 138.1 L64.2 136.3 L64.9 134.6 L65.6 132.9 L66.3 131.2 L66.9 129.6 L67.6 128.1 L68.2 126.6 L68.8 125.1 L69.4 123.7 L70.0 122.4 L70.6 121.1 L71.1 119.9 L71.7 118.8 L72.3 117.7 L72.8 116.7 L73.3 115.8 L73.9 114.9 L74.4 114.1 L74.9 113.5 L75.5 112.9 L76.0 112.4 L76.5 112.0 L77.2 111.9 L77.9 112.0 L78.5 112.4 L79.0 112.9 L79.6 113.5 L80.1 114.1 L80.6 114.9 L81.1 115.8 L81.7 116.7 L82.2 117.7 L82.8 118.8 L83.3 119.9 L83.9 121.1 L84.5 122.4 L85.1 123.7 L85.7 125.1 L86.3 126.6 L86.9 128.1 L87.6 129.6 L88.2 131.2 L88.9 132.9 L89.6 134.6 L90.3 136.3 L91.0 138.1 L91.7 140.0 M163.9 140.0 L164.7 138.0 L165.4 136.1 L166.1 134.3 L166.7 132.5 L167.4 130.7 L168.1 129.0 L168.7 127.4 L169.3 125.8 L169.9 124.2 L170.5 122.8 L171.1 121.4 L171.7 120.0 L172.3 118.7 L172.8 117.5 L173.4 116.4 L173.9 115.3 L174.5 114.3 L175.0 113.4 L175.5 112.6 L176.1 111.9 L176.6 111.3 L177.1 110.7 L177.7 110.4 L178.4 110.2 L179.1 110.4 L179.6 110.7 L180.2 111.3 L180.7 111.9 L181.2 112.6 L181.7 113.4 L182.3 114.3 L182.8 115.3 L183.4 116.4 L183.9 117.5 L184.5 118.7 L185.0 120.0 L185.6 121.4 L186.2 122.8 L186.8 124.2 L187.4 125.8 L188.1 127.4 L188.7 129.0 L189.4 130.7 L190.0 132.5 L190.7 134.3 L191.4 136.1 L192.1 138.0 L192.8 140.0" fill="none" stroke="#d31212" stroke-width="2.3" stroke-linejoin="round"/>
<path d="M5.0 47.5 L5.2 47.6 L5.4 47.8 L5.6 47.9 L5.9 48.1 L6.2 48.2 L6.6 48.4 L6.9 48.6 L7.3 48.8 L7.6 49.0 L8.0 49.2 L8.4 49.4 L8.7 49.6 L9.1 49.8 L9.4 50.0 L9.8 50.1 L10.1 50.2 L10.3 50.3 L10.6 50.4 L10.9 50.5 L11.2 50.6 L11.4 50.7 L11.7 50.8 L12.0 50.9 L12.2 50.9 L12.5 51.0 L12.7 51.0 L13.0 51.0 L13.3 51.1 L13.5 51.0 L13.8 51.0 L14.1 51.0 L14.4 50.9 L14.7 50.8 L15.0 50.7 L15.3 50.6 L15.6 50.4 L15.9 50.3 L16.2 50.1 L16.6 49.9 L16.9 49.7 L17.2 49.5 L17.5 49.3 L17.8 49.0 L18.2 48.8 L18.5 48.5 L18.8 48.2 L19.1 47.9 L19.4 47.5 L19.8 47.2 L20.1 46.8 L20.4 46.4 L20.7 45.9 L21.1 45.5 L21.4 45.0 L21.7 44.5 L22.0 44.0 L22.3 43.5 L22.7 43.0 L23.0 42.5 L23.3 42.0 L23.6 41.5 L23.9 41.0 L24.2 40.6 L24.5 40.2 L24.8 39.8 L25.1 39.3 L25.4 38.9 L25.6 38.4 L25.9 38.0 L26.2 37.5 L26.5 37.1 L26.7 36.6 L27.0 36.2 L27.2 35.9 L27.5 35.6 L27.8 35.3 L28.0 35.1 L28.3 34.9 L28.6 34.8 L28.8 34.8 L29.1 34.8 L29.4 34.9 L29.6 34.9 L29.9 35.0 L30.2 35.1 L30.4 35.2 L30.7 35.4 L31.0 35.7 L31.2 36.0 L31.5 36.4 L31.8 36.9 L32.0 37.5 L32.3 38.2 L32.6 39.1 L32.9 40.1 L33.2 41.2 L33.5 42.4 L33.8 43.8 L34.1 45.4 L34.4 47.0 L34.7 48.7 L35.0 50.6 L35.3 52.5 L35.6 54.6 L35.9 56.7 L36.2 58.8 L36.6 61.1 L36.9 63.4 L37.2 65.7 L37.6 68.1 L37.9 70.6 L38.2 73.0 L38.6 75.6 L38.9 78.3 L39.3 81.2 L39.7 84.3 L40.0 87.4 L40.4 90.7 L40.8 93.9 L41.2 97.2 L41.5 100.4 L41.9 103.6 L42.3 106.7 L42.6 109.7 L43.0 112.5 L43.4 115.2 L43.7 117.7 L44.0 119.9 L44.3 121.9 L44.7 123.8 L45.0 125.6 L45.3 127.3 L45.6 128.8 L45.9 130.3 L46.2 131.6 L46.5 132.9 L46.8 134.0 L47.1 135.1 L47.4 136.1 L47.6 137.0 L47.8 137.9 L48.0 138.6 L48.2 139.3 L48.3 140.0 L48.3 140.0 L49.4 132.6 L50.5 125.4 L51.5 118.3 L52.6 111.5 L53.6 104.9 L54.5 98.5 L55.5 92.3 L56.4 86.3 L57.3 80.5 L58.3 75.0 L59.1 69.6 L60.0 64.6 L60.9 59.7 L61.7 55.2 L62.5 50.9 L63.4 46.8 L64.2 43.1 L65.0 39.7 L65.8 36.6 L66.5 33.8 L67.3 31.5 L68.1 29.6 L69.0 28.1 L70.0 27.4 L71.1 28.1 L71.9 29.6 L72.7 31.5 L73.5 33.8 L74.3 36.6 L75.1 39.7 L75.9 43.1 L76.7 46.8 L77.5 50.9 L78.3 55.2 L79.2 59.7 L80.0 64.6 L80.9 69.6 L81.8 75.0 L82.7 80.5 L83.6 86.3 L84.5 92.3 L85.5 98.5 L86.5 104.9 L87.5 111.5 L88.5 118.3 L89.5 125.4 L90.6 132.6 L91.7 140.0 M106.1 140.0 L106.9 133.9 L107.6 128.0 L108.3 122.2 L108.9 116.6 L109.6 111.1 L110.3 105.8 L110.9 100.7 L111.5 95.8 L112.1 91.0 L112.7 86.5 L113.3 82.1 L113.9 77.9 L114.5 74.0 L115.0 70.2 L115.6 66.7 L116.1 63.3 L116.7 60.3 L117.2 57.5 L117.7 54.9 L118.3 52.6 L118.8 50.7 L119.3 49.1 L119.9 47.9 L120.6 47.4 L121.3 47.9 L121.8 49.1 L122.4 50.7 L122.9 52.6 L123.4 54.9 L123.9 57.5 L124.5 60.3 L125.0 63.3 L125.6 66.7 L126.1 70.2 L126.7 74.0 L127.3 77.9 L127.8 82.1 L128.4 86.5 L129.0 91.0 L129.6 95.8 L130.3 100.7 L130.9 105.8 L131.6 111.1 L132.2 116.6 L132.9 122.2 L133.6 128.0 L134.3 133.9 L135.0 140.0 M149.5 140.0 L150.2 133.9 L150.9 128.0 L151.6 122.2 L152.3 116.6 L153.0 111.1 L153.6 105.8 L154.2 100.7 L154.9 95.8 L155.5 91.0 L156.1 86.5 L156.7 82.1 L157.3 77.9 L157.8 74.0 L158.4 70.2 L158.9 66.7 L159.5 63.3 L160.0 60.3 L160.6 57.5 L161.1 54.9 L161.6 52.6 L162.1 50.7 L162.7 49.1 L163.2 47.9 L163.9 47.4 L164.6 47.9 L165.2 49.1 L165.7 50.7 L166.2 52.6 L166.8 54.9 L167.3 57.5 L167.8 60.3 L168.4 63.3 L168.9 66.7 L169.5 70.2 L170.0 74.0 L170.6 77.9 L171.2 82.1 L171.8 86.5 L172.4 91.0 L173.0 95.8 L173.6 100.7 L174.3 105.8 L174.9 111.1 L175.6 116.6 L176.2 122.2 L176.9 128.0 L177.6 133.9 L178.4 140.0 M207.3 140.0 L208.0 133.9 L208.7 128.0 L209.4 122.2 L210.1 116.6 L210.7 111.1 L211.4 105.8 L212.0 100.7 L212.7 95.8 L213.3 91.0 L213.9 86.5 L214.5 82.1 L215.1 77.9 L215.6 74.0 L216.2 70.2 L216.7 66.7 L217.3 63.3 L217.8 60.3 L218.4 57.5 L218.9 54.9 L219.4 52.6 L219.9 50.7 L220.5 49.1 L221.0 47.9 L221.7 47.4 L222.4 47.9 L223.0 49.1 L223.5 50.7 L224.0 52.6 L224.6 54.9 L225.1 57.5 L225.6 60.3 L226.2 63.3 L226.7 66.7 L227.3 70.2 L227.8 74.0 L228.4 77.9 L229.0 82.1 L229.6 86.5 L230.2 91.0 L230.8 95.8 L231.4 100.7 L232.0 105.8 L232.7 111.1 L233.4 116.6 L234.0 122.2 L234.7 128.0 L235.4 133.9 L236.2 140.0 M265.1 140.0 L265.8 133.9 L266.5 127.9 L267.2 122.1 L267.9 116.5 L268.5 111.0 L269.2 105.7 L269.8 100.6 L270.5 95.6 L271.1 90.9 L271.7 86.3 L272.3 81.9 L272.8 77.7 L273.4 73.7 L274.0 69.9 L274.5 66.4 L275.1 63.1 L275.6 60.0 L276.1 57.2 L276.7 54.6 L277.2 52.3 L277.7 50.4 L278.3 48.8 L278.8 47.6 L279.5 47.0 L280.2 47.6 L280.8 48.8 L281.3 50.4 L281.8 52.3 L282.4 54.6 L282.9 57.2 L283.4 60.0 L283.9 63.1 L284.5 66.4 L285.0 69.9 L285.6 73.7 L286.2 77.7 L286.8 81.9 L287.4 86.3 L288.0 90.9 L288.6 95.6 L289.2 100.6 L289.8 105.7 L290.5 111.0 L291.2 116.5 L291.8 122.1 L292.5 127.9 L293.2 133.9 L294.0 140.0 M294.0 140.0 L294.7 133.8 L295.4 127.8 L296.1 122.0 L296.8 116.3 L297.4 110.8 L298.1 105.5 L298.7 100.3 L299.3 95.3 L300.0 90.5 L300.6 85.9 L301.2 81.5 L301.7 77.3 L302.3 73.2 L302.9 69.4 L303.4 65.9 L304.0 62.5 L304.5 59.4 L305.0 56.6 L305.6 54.0 L306.1 51.7 L306.6 49.7 L307.2 48.1 L307.7 46.9 L308.4 46.4 L309.1 46.9 L309.7 48.1 L310.2 49.7 L310.7 51.7 L311.2 54.0 L311.8 56.6 L312.3 59.4 L312.8 62.5 L313.4 65.9 L313.9 69.4 L314.5 73.2 L315.1 77.3 L315.7 81.5 L316.3 85.9 L316.9 90.5 L317.5 95.3 L318.1 100.3 L318.7 105.5 L319.4 110.8 L320.0 116.3 L320.7 122.0 L321.4 127.8 L322.1 133.8 L322.9 140.0 M337.3 140.0 L338.0 133.8 L338.7 127.8 L339.4 122.0 L340.1 116.3 L340.8 110.8 L341.4 105.5 L342.1 100.3 L342.7 95.3 L343.3 90.5 L343.9 85.9 L344.5 81.5 L345.1 77.3 L345.7 73.2 L346.2 69.4 L346.8 65.9 L347.3 62.5 L347.9 59.4 L348.4 56.6 L348.9 54.0 L349.4 51.7 L350.0 49.7 L350.5 48.1 L351.1 46.9 L351.8 46.4 L352.4 46.9 L353.0 48.1 L353.5 49.7 L354.1 51.7 L354.6 54.0 L355.1 56.6 L355.6 59.4 L356.2 62.5 L356.7 65.9 L357.3 69.4 L357.8 73.2 L358.4 77.3 L359.0 81.5 L359.6 85.9 L360.2 90.5 L360.8 95.3 L361.4 100.3 L362.1 105.5 L362.7 110.8 L363.4 116.3 L364.1 122.0 L364.8 127.8 L365.5 133.8 L366.2 140.0 M366.2 140.0 L366.9 133.9 L367.6 127.9 L368.3 122.1 L369.0 116.5 L369.7 111.0 L370.3 105.7 L371.0 100.6 L371.6 95.6 L372.2 90.9 L372.8 86.3 L373.4 81.9 L374.0 77.7 L374.6 73.7 L375.1 69.9 L375.7 66.4 L376.2 63.1 L376.8 60.0 L377.3 57.2 L377.8 54.6 L378.3 52.3 L378.9 50.4 L379.4 48.8 L380.0 47.6 L380.6 47.0 L381.3 47.6 L381.9 48.8 L382.4 50.4 L383.0 52.3 L383.5 54.6 L384.0 57.2 L384.5 60.0 L385.1 63.1 L385.6 66.4 L386.2 69.9 L386.7 73.7 L387.3 77.7 L387.9 81.9 L388.5 86.3 L389.1 90.9 L389.7 95.6 L390.3 100.6 L391.0 105.7 L391.6 111.0 L392.3 116.5 L393.0 122.1 L393.7 127.9 L394.4 133.9 L395.1 140.0 M395.1 140.0 L395.8 133.7 L396.5 127.6 L397.2 121.7 L397.9 115.9 L398.6 110.3 L399.2 104.8 L399.9 99.6 L400.5 94.5 L401.1 89.6 L401.7 84.9 L402.3 80.4 L402.9 76.1 L403.4 72.0 L404.0 68.2 L404.6 64.5 L405.1 61.1 L405.6 58.0 L406.2 55.1 L406.7 52.4 L407.2 50.1 L407.8 48.1 L408.3 46.5 L408.8 45.3 L409.5 44.7 L410.2 45.3 L410.8 46.5 L411.3 48.1 L411.9 50.1 L412.4 52.4 L412.9 55.1 L413.4 58.0 L414.0 61.1 L414.5 64.5 L415.1 68.2 L415.6 72.0 L416.2 76.1 L416.8 80.4 L417.4 84.9 L418.0 89.6 L418.6 94.5 L419.2 99.6 L419.9 104.8 L420.5 110.3 L421.2 115.9 L421.9 121.7 L422.6 127.6 L423.3 133.7 L424.0 140.0" fill="none" stroke="#c4c4f0" stroke-width="4" transform="translate(0.5 1.2)" opacity="0.5" stroke-linejoin="round"/>
<path d="M5.0 47.5 L5.2 47.6 L5.4 47.8 L5.6 47.9 L5.9 48.1 L6.2 48.2 L6.6 48.4 L6.9 48.6 L7.3 48.8 L7.6 49.0 L8.0 49.2 L8.4 49.4 L8.7 49.6 L9.1 49.8 L9.4 50.0 L9.8 50.1 L10.1 50.2 L10.3 50.3 L10.6 50.4 L10.9 50.5 L11.2 50.6 L11.4 50.7 L11.7 50.8 L12.0 50.9 L12.2 50.9 L12.5 51.0 L12.7 51.0 L13.0 51.0 L13.3 51.1 L13.5 51.0 L13.8 51.0 L14.1 51.0 L14.4 50.9 L14.7 50.8 L15.0 50.7 L15.3 50.6 L15.6 50.4 L15.9 50.3 L16.2 50.1 L16.6 49.9 L16.9 49.7 L17.2 49.5 L17.5 49.3 L17.8 49.0 L18.2 48.8 L18.5 48.5 L18.8 48.2 L19.1 47.9 L19.4 47.5 L19.8 47.2 L20.1 46.8 L20.4 46.4 L20.7 45.9 L21.1 45.5 L21.4 45.0 L21.7 44.5 L22.0 44.0 L22.3 43.5 L22.7 43.0 L23.0 42.5 L23.3 42.0 L23.6 41.5 L23.9 41.0 L24.2 40.6 L24.5 40.2 L24.8 39.8 L25.1 39.3 L25.4 38.9 L25.6 38.4 L25.9 38.0 L26.2 37.5 L26.5 37.1 L26.7 36.6 L27.0 36.2 L27.2 35.9 L27.5 35.6 L27.8 35.3 L28.0 35.1 L28.3 34.9 L28.6 34.8 L28.8 34.8 L29.1 34.8 L29.4 34.9 L29.6 34.9 L29.9 35.0 L30.2 35.1 L30.4 35.2 L30.7 35.4 L31.0 35.7 L31.2 36.0 L31.5 36.4 L31.8 36.9 L32.0 37.5 L32.3 38.2 L32.6 39.1 L32.9 40.1 L33.2 41.2 L33.5 42.4 L33.8 43.8 L34.1 45.4 L34.4 47.0 L34.7 48.7 L35.0 50.6 L35.3 52.5 L35.6 54.6 L35.9 56.7 L36.2 58.8 L36.6 61.1 L36.9 63.4 L37.2 65.7 L37.6 68.1 L37.9 70.6 L38.2 73.0 L38.6 75.6 L38.9 78.3 L39.3 81.2 L39.7 84.3 L40.0 87.4 L40.4 90.7 L40.8 93.9 L41.2 97.2 L41.5 100.4 L41.9 103.6 L42.3 106.7 L42.6 109.7 L43.0 112.5 L43.4 115.2 L43.7 117.7 L44.0 119.9 L44.3 121.9 L44.7 123.8 L45.0 125.6 L45.3 127.3 L45.6 128.8 L45.9 130.3 L46.2 131.6 L46.5 132.9 L46.8 134.0 L47.1 135.1 L47.4 136.1 L47.6 137.0 L47.8 137.9 L48.0 138.6 L48.2 139.3 L48.3 140.0 L48.3 140.0 L49.4 132.6 L50.5 125.4 L51.5 118.3 L52.6 111.5 L53.6 104.9 L54.5 98.5 L55.5 92.3 L56.4 86.3 L57.3 80.5 L58.3 75.0 L59.1 69.6 L60.0 64.6 L60.9 59.7 L61.7 55.2 L62.5 50.9 L63.4 46.8 L64.2 43.1 L65.0 39.7 L65.8 36.6 L66.5 33.8 L67.3 31.5 L68.1 29.6 L69.0 28.1 L70.0 27.4 L71.1 28.1 L71.9 29.6 L72.7 31.5 L73.5 33.8 L74.3 36.6 L75.1 39.7 L75.9 43.1 L76.7 46.8 L77.5 50.9 L78.3 55.2 L79.2 59.7 L80.0 64.6 L80.9 69.6 L81.8 75.0 L82.7 80.5 L83.6 86.3 L84.5 92.3 L85.5 98.5 L86.5 104.9 L87.5 111.5 L88.5 118.3 L89.5 125.4 L90.6 132.6 L91.7 140.0 M106.1 140.0 L106.9 133.9 L107.6 128.0 L108.3 122.2 L108.9 116.6 L109.6 111.1 L110.3 105.8 L110.9 100.7 L111.5 95.8 L112.1 91.0 L112.7 86.5 L113.3 82.1 L113.9 77.9 L114.5 74.0 L115.0 70.2 L115.6 66.7 L116.1 63.3 L116.7 60.3 L117.2 57.5 L117.7 54.9 L118.3 52.6 L118.8 50.7 L119.3 49.1 L119.9 47.9 L120.6 47.4 L121.3 47.9 L121.8 49.1 L122.4 50.7 L122.9 52.6 L123.4 54.9 L123.9 57.5 L124.5 60.3 L125.0 63.3 L125.6 66.7 L126.1 70.2 L126.7 74.0 L127.3 77.9 L127.8 82.1 L128.4 86.5 L129.0 91.0 L129.6 95.8 L130.3 100.7 L130.9 105.8 L131.6 111.1 L132.2 116.6 L132.9 122.2 L133.6 128.0 L134.3 133.9 L135.0 140.0 M149.5 140.0 L150.2 133.9 L150.9 128.0 L151.6 122.2 L152.3 116.6 L153.0 111.1 L153.6 105.8 L154.2 100.7 L154.9 95.8 L155.5 91.0 L156.1 86.5 L156.7 82.1 L157.3 77.9 L157.8 74.0 L158.4 70.2 L158.9 66.7 L159.5 63.3 L160.0 60.3 L160.6 57.5 L161.1 54.9 L161.6 52.6 L162.1 50.7 L162.7 49.1 L163.2 47.9 L163.9 47.4 L164.6 47.9 L165.2 49.1 L165.7 50.7 L166.2 52.6 L166.8 54.9 L167.3 57.5 L167.8 60.3 L168.4 63.3 L168.9 66.7 L169.5 70.2 L170.0 74.0 L170.6 77.9 L171.2 82.1 L171.8 86.5 L172.4 91.0 L173.0 95.8 L173.6 100.7 L174.3 105.8 L174.9 111.1 L175.6 116.6 L176.2 122.2 L176.9 128.0 L177.6 133.9 L178.4 140.0 M207.3 140.0 L208.0 133.9 L208.7 128.0 L209.4 122.2 L210.1 116.6 L210.7 111.1 L211.4 105.8 L212.0 100.7 L212.7 95.8 L213.3 91.0 L213.9 86.5 L214.5 82.1 L215.1 77.9 L215.6 74.0 L216.2 70.2 L216.7 66.7 L217.3 63.3 L217.8 60.3 L218.4 57.5 L218.9 54.9 L219.4 52.6 L219.9 50.7 L220.5 49.1 L221.0 47.9 L221.7 47.4 L222.4 47.9 L223.0 49.1 L223.5 50.7 L224.0 52.6 L224.6 54.9 L225.1 57.5 L225.6 60.3 L226.2 63.3 L226.7 66.7 L227.3 70.2 L227.8 74.0 L228.4 77.9 L229.0 82.1 L229.6 86.5 L230.2 91.0 L230.8 95.8 L231.4 100.7 L232.0 105.8 L232.7 111.1 L233.4 116.6 L234.0 122.2 L234.7 128.0 L235.4 133.9 L236.2 140.0 M265.1 140.0 L265.8 133.9 L266.5 127.9 L267.2 122.1 L267.9 116.5 L268.5 111.0 L269.2 105.7 L269.8 100.6 L270.5 95.6 L271.1 90.9 L271.7 86.3 L272.3 81.9 L272.8 77.7 L273.4 73.7 L274.0 69.9 L274.5 66.4 L275.1 63.1 L275.6 60.0 L276.1 57.2 L276.7 54.6 L277.2 52.3 L277.7 50.4 L278.3 48.8 L278.8 47.6 L279.5 47.0 L280.2 47.6 L280.8 48.8 L281.3 50.4 L281.8 52.3 L282.4 54.6 L282.9 57.2 L283.4 60.0 L283.9 63.1 L284.5 66.4 L285.0 69.9 L285.6 73.7 L286.2 77.7 L286.8 81.9 L287.4 86.3 L288.0 90.9 L288.6 95.6 L289.2 100.6 L289.8 105.7 L290.5 111.0 L291.2 116.5 L291.8 122.1 L292.5 127.9 L293.2 133.9 L294.0 140.0 M294.0 140.0 L294.7 133.8 L295.4 127.8 L296.1 122.0 L296.8 116.3 L297.4 110.8 L298.1 105.5 L298.7 100.3 L299.3 95.3 L300.0 90.5 L300.6 85.9 L301.2 81.5 L301.7 77.3 L302.3 73.2 L302.9 69.4 L303.4 65.9 L304.0 62.5 L304.5 59.4 L305.0 56.6 L305.6 54.0 L306.1 51.7 L306.6 49.7 L307.2 48.1 L307.7 46.9 L308.4 46.4 L309.1 46.9 L309.7 48.1 L310.2 49.7 L310.7 51.7 L311.2 54.0 L311.8 56.6 L312.3 59.4 L312.8 62.5 L313.4 65.9 L313.9 69.4 L314.5 73.2 L315.1 77.3 L315.7 81.5 L316.3 85.9 L316.9 90.5 L317.5 95.3 L318.1 100.3 L318.7 105.5 L319.4 110.8 L320.0 116.3 L320.7 122.0 L321.4 127.8 L322.1 133.8 L322.9 140.0 M337.3 140.0 L338.0 133.8 L338.7 127.8 L339.4 122.0 L340.1 116.3 L340.8 110.8 L341.4 105.5 L342.1 100.3 L342.7 95.3 L343.3 90.5 L343.9 85.9 L344.5 81.5 L345.1 77.3 L345.7 73.2 L346.2 69.4 L346.8 65.9 L347.3 62.5 L347.9 59.4 L348.4 56.6 L348.9 54.0 L349.4 51.7 L350.0 49.7 L350.5 48.1 L351.1 46.9 L351.8 46.4 L352.4 46.9 L353.0 48.1 L353.5 49.7 L354.1 51.7 L354.6 54.0 L355.1 56.6 L355.6 59.4 L356.2 62.5 L356.7 65.9 L357.3 69.4 L357.8 73.2 L358.4 77.3 L359.0 81.5 L359.6 85.9 L360.2 90.5 L360.8 95.3 L361.4 100.3 L362.1 105.5 L362.7 110.8 L363.4 116.3 L364.1 122.0 L364.8 127.8 L365.5 133.8 L366.2 140.0 M366.2 140.0 L366.9 133.9 L367.6 127.9 L368.3 122.1 L369.0 116.5 L369.7 111.0 L370.3 105.7 L371.0 100.6 L371.6 95.6 L372.2 90.9 L372.8 86.3 L373.4 81.9 L374.0 77.7 L374.6 73.7 L375.1 69.9 L375.7 66.4 L376.2 63.1 L376.8 60.0 L377.3 57.2 L377.8 54.6 L378.3 52.3 L378.9 50.4 L379.4 48.8 L380.0 47.6 L380.6 47.0 L381.3 47.6 L381.9 48.8 L382.4 50.4 L383.0 52.3 L383.5 54.6 L384.0 57.2 L384.5 60.0 L385.1 63.1 L385.6 66.4 L386.2 69.9 L386.7 73.7 L387.3 77.7 L387.9 81.9 L388.5 86.3 L389.1 90.9 L389.7 95.6 L390.3 100.6 L391.0 105.7 L391.6 111.0 L392.3 116.5 L393.0 122.1 L393.7 127.9 L394.4 133.9 L395.1 140.0 M395.1 140.0 L395.8 133.7 L396.5 127.6 L397.2 121.7 L397.9 115.9 L398.6 110.3 L399.2 104.8 L399.9 99.6 L400.5 94.5 L401.1 89.6 L401.7 84.9 L402.3 80.4 L402.9 76.1 L403.4 72.0 L404.0 68.2 L404.6 64.5 L405.1 61.1 L405.6 58.0 L406.2 55.1 L406.7 52.4 L407.2 50.1 L407.8 48.1 L408.3 46.5 L408.8 45.3 L409.5 44.7 L410.2 45.3 L410.8 46.5 L411.3 48.1 L411.9 50.1 L412.4 52.4 L412.9 55.1 L413.4 58.0 L414.0 61.1 L414.5 64.5 L415.1 68.2 L415.6 72.0 L416.2 76.1 L416.8 80.4 L417.4 84.9 L418.0 89.6 L418.6 94.5 L419.2 99.6 L419.9 104.8 L420.5 110.3 L421.2 115.9 L421.9 121.7 L422.6 127.6 L423.3 133.7 L424.0 140.0" fill="none" stroke="#0707c8" stroke-width="2.2" stroke-linejoin="round"/>
</svg>
<div class="abs" style="left:621.5px;top:722px;font-size:14px;line-height:20px;color:#333">Packet Rate <span class="caret" style="margin-left:0.5px"></span></div>
<div class="abs" style="left:621px;top:742px;width:460px;height:1px;background:#e8e8e8"></div>
<div class="lg" style="left:733px;top:722px"><i style="background:#ee0000"></i></div><div class="lgt" style="left:750.5px;top:722px">TX: 0.00 pps</div>
<div class="lg" style="left:847px;top:722px"><i style="background:#0000ee"></i></div><div class="lgt" style="left:864.5px;top:722px">RX: 0.00 pps</div>
<div class="axl" style="left:600.5px;top:744.4px">2</div>
<div class="axl" style="left:600.5px;top:812px">1</div>
<div class="axl" style="left:600.5px;top:878.7px">pps</div>
<svg class="abs" style="left:639px;top:745px" width="440" height="150" viewBox="0 0 440 150">
<line x1="80.5" y1="6" x2="80.5" y2="140" stroke="#dbdbdb" stroke-width="1"/>
<line x1="154.5" y1="6" x2="154.5" y2="140" stroke="#dbdbdb" stroke-width="1"/>
<line x1="227.5" y1="6" x2="227.5" y2="140" stroke="#dbdbdb" stroke-width="1"/>
<line x1="301.5" y1="6" x2="301.5" y2="140" stroke="#dbdbdb" stroke-width="1"/>
<line x1="375.5" y1="6" x2="375.5" y2="140" stroke="#dbdbdb" stroke-width="1"/>
<line x1="6" y1="73.5" x2="434" y2="73.5" stroke="#dbdbdb" stroke-width="1"/>
<rect x="6" y="5" width="429" height="136" fill="none" stroke="#454545" stroke-width="2"/>
<path d="M7.0 140.0 L21.7 140.0 M242.6 140.0 L257.3 140.0 M272.0 140.0 L286.8 140.0 M301.5 140.0 L316.2 140.0 M330.9 140.0 L345.7 140.0 M360.4 140.0 L375.1 140.0 M389.8 140.0 L404.5 140.0 M419.3 140.0 L434.0 140.0 M36.4 140.0 L37.4 139.6 L38.2 139.3 L39.1 139.0 L39.9 138.7 L40.7 138.5 L41.6 138.3 L42.6 138.2 L43.8 138.1 L45.1 138.2 L46.0 138.3 L46.9 138.5 L47.7 138.7 L48.6 139.0 L49.4 139.3 L50.3 139.6 L51.2 140.0 M110.1 140.0 L111.0 139.6 L111.8 139.3 L112.7 139.0 L113.5 138.7 L114.4 138.5 L115.2 138.3 L116.2 138.2 L117.4 138.1 L118.7 138.2 L119.6 138.3 L120.5 138.5 L121.4 138.7 L122.2 139.0 L123.0 139.3 L123.9 139.6 L124.8 140.0 M139.5 140.0 L140.4 139.6 L141.3 139.3 L142.1 139.0 L143.0 138.7 L143.8 138.5 L144.7 138.3 L145.6 138.2 L146.9 138.1 L148.1 138.2 L149.1 138.3 L150.0 138.5 L150.8 138.7 L151.6 139.0 L152.5 139.3 L153.3 139.6 L154.2 140.0 M213.1 140.0 L214.0 139.6 L214.9 139.3 L215.7 139.0 L216.6 138.7 L217.4 138.5 L218.3 138.3 L219.2 138.2 L220.5 138.1 L221.8 138.2 L222.7 138.3 L223.6 138.5 L224.4 138.7 L225.2 139.0 L226.1 139.3 L227.0 139.6 L227.9 140.0" fill="none" stroke="#f3c0c0" stroke-width="4" transform="translate(0.5 1.2)" opacity="0.55"/>
<path d="M7.0 140.0 L21.7 140.0 M242.6 140.0 L257.3 140.0 M272.0 140.0 L286.8 140.0 M301.5 140.0 L316.2 140.0 M330.9 140.0 L345.7 140.0 M360.4 140.0 L375.1 140.0 M389.8 140.0 L404.5 140.0 M419.3 140.0 L434.0 140.0 M36.4 140.0 L37.4 139.6 L38.2 139.3 L39.1 139.0 L39.9 138.7 L40.7 138.5 L41.6 138.3 L42.6 138.2 L43.8 138.1 L45.1 138.2 L46.0 138.3 L46.9 138.5 L47.7 138.7 L48.6 139.0 L49.4 139.3 L50.3 139.6 L51.2 140.0 M110.1 140.0 L111.0 139.6 L111.8 139.3 L112.7 139.0 L113.5 138.7 L114.4 138.5 L115.2 138.3 L116.2 138.2 L117.4 138.1 L118.7 138.2 L119.6 138.3 L120.5 138.5 L121.4 138.7 L122.2 139.0 L123.0 139.3 L123.9 139.6 L124.8 140.0 M139.5 140.0 L140.4 139.6 L141.3 139.3 L142.1 139.0 L143.0 138.7 L143.8 138.5 L144.7 138.3 L145.6 138.2 L146.9 138.1 L148.1 138.2 L149.1 138.3 L150.0 138.5 L150.8 138.7 L151.6 139.0 L152.5 139.3 L153.3 139.6 L154.2 140.0 M213.1 140.0 L214.0 139.6 L214.9 139.3 L215.7 139.0 L216.6 138.7 L217.4 138.5 L218.3 138.3 L219.2 138.2 L220.5 138.1 L221.8 138.2 L222.7 138.3 L223.6 138.5 L224.4 138.7 L225.2 139.0 L226.1 139.3 L227.0 139.6 L227.9 140.0" fill="none" stroke="#b81515" stroke-width="2.6" stroke-linejoin="round" transform="translate(0 0.2)"/>
<path d="M65.9 140.0 L66.6 135.6 L67.4 131.3 L68.1 127.1 L68.8 123.0 L69.4 119.1 L70.1 115.3 L70.7 111.6 L71.4 108.0 L72.0 104.6 L72.6 101.3 L73.2 98.1 L73.8 95.1 L74.4 92.2 L75.0 89.5 L75.5 86.9 L76.1 84.6 L76.6 82.3 L77.2 80.3 L77.7 78.4 L78.3 76.8 L78.8 75.4 L79.3 74.3 L79.9 73.4 L80.6 73.0 L81.3 73.4 L81.9 74.3 L82.4 75.4 L83.0 76.8 L83.5 78.4 L84.0 80.3 L84.6 82.3 L85.1 84.6 L85.7 86.9 L86.3 89.5 L86.8 92.2 L87.4 95.1 L88.0 98.1 L88.6 101.3 L89.2 104.6 L89.9 108.0 L90.5 111.6 L91.1 115.3 L91.8 119.1 L92.5 123.0 L93.2 127.1 L93.9 131.3 L94.6 135.6 L95.3 140.0 M169.0 140.0 L169.7 135.6 L170.4 131.3 L171.1 127.1 L171.8 123.0 L172.5 119.1 L173.2 115.3 L173.8 111.6 L174.5 108.0 L175.1 104.6 L175.7 101.3 L176.3 98.1 L176.9 95.1 L177.5 92.2 L178.0 89.5 L178.6 86.9 L179.2 84.6 L179.7 82.3 L180.3 80.3 L180.8 78.4 L181.3 76.8 L181.9 75.4 L182.4 74.3 L183.0 73.4 L183.7 73.0 L184.4 73.4 L185.0 74.3 L185.5 75.4 L186.0 76.8 L186.6 78.4 L187.1 80.3 L187.7 82.3 L188.2 84.6 L188.8 86.9 L189.3 89.5 L189.9 92.2 L190.5 95.1 L191.1 98.1 L191.7 101.3 L192.3 104.6 L192.9 108.0 L193.6 111.6 L194.2 115.3 L194.9 119.1 L195.5 123.0 L196.2 127.1 L196.9 131.3 L197.7 135.6 L198.4 140.0" fill="none" stroke="#f3c0c0" stroke-width="4" transform="translate(0.5 1.2)" opacity="0.55"/>
<path d="M65.9 140.0 L66.6 135.6 L67.4 131.3 L68.1 127.1 L68.8 123.0 L69.4 119.1 L70.1 115.3 L70.7 111.6 L71.4 108.0 L72.0 104.6 L72.6 101.3 L73.2 98.1 L73.8 95.1 L74.4 92.2 L75.0 89.5 L75.5 86.9 L76.1 84.6 L76.6 82.3 L77.2 80.3 L77.7 78.4 L78.3 76.8 L78.8 75.4 L79.3 74.3 L79.9 73.4 L80.6 73.0 L81.3 73.4 L81.9 74.3 L82.4 75.4 L83.0 76.8 L83.5 78.4 L84.0 80.3 L84.6 82.3 L85.1 84.6 L85.7 86.9 L86.3 89.5 L86.8 92.2 L87.4 95.1 L88.0 98.1 L88.6 101.3 L89.2 104.6 L89.9 108.0 L90.5 111.6 L91.1 115.3 L91.8 119.1 L92.5 123.0 L93.2 127.1 L93.9 131.3 L94.6 135.6 L95.3 140.0 M169.0 140.0 L169.7 135.6 L170.4 131.3 L171.1 127.1 L171.8 123.0 L172.5 119.1 L173.2 115.3 L173.8 111.6 L174.5 108.0 L175.1 104.6 L175.7 101.3 L176.3 98.1 L176.9 95.1 L177.5 92.2 L178.0 89.5 L178.6 86.9 L179.2 84.6 L179.7 82.3 L180.3 80.3 L180.8 78.4 L181.3 76.8 L181.9 75.4 L182.4 74.3 L183.0 73.4 L183.7 73.0 L184.4 73.4 L185.0 74.3 L185.5 75.4 L186.0 76.8 L186.6 78.4 L187.1 80.3 L187.7 82.3 L188.2 84.6 L188.8 86.9 L189.3 89.5 L189.9 92.2 L190.5 95.1 L191.1 98.1 L191.7 101.3 L192.3 104.6 L192.9 108.0 L193.6 111.6 L194.2 115.3 L194.9 119.1 L195.5 123.0 L196.2 127.1 L196.9 131.3 L197.7 135.6 L198.4 140.0" fill="none" stroke="#d31212" stroke-width="2.3" stroke-linejoin="round"/>
<path d="M7.0 73.0 L7.2 73.1 L7.4 73.2 L7.7 73.4 L7.9 73.5 L8.3 73.7 L8.6 73.9 L8.9 74.1 L9.3 74.3 L9.7 74.5 L10.0 74.7 L10.4 74.9 L10.8 75.1 L11.2 75.3 L11.5 75.4 L11.8 75.6 L12.2 75.7 L12.4 75.8 L12.7 75.9 L13.0 76.0 L13.3 76.1 L13.6 76.2 L13.8 76.3 L14.1 76.3 L14.4 76.4 L14.6 76.4 L14.9 76.5 L15.2 76.5 L15.4 76.5 L15.7 76.5 L16.0 76.5 L16.3 76.4 L16.6 76.4 L16.9 76.3 L17.2 76.1 L17.5 76.0 L17.8 75.8 L18.1 75.7 L18.4 75.5 L18.8 75.3 L19.1 75.1 L19.4 74.8 L19.8 74.6 L20.1 74.3 L20.4 74.1 L20.7 73.8 L21.1 73.5 L21.4 73.3 L21.7 73.0 L22.0 72.7 L22.4 72.4 L22.7 72.1 L23.0 71.8 L23.4 71.4 L23.7 71.1 L24.0 70.7 L24.3 70.3 L24.7 70.0 L25.0 69.6 L25.3 69.3 L25.6 68.9 L26.0 68.6 L26.3 68.2 L26.6 67.9 L26.9 67.6 L27.2 67.3 L27.5 67.0 L27.8 66.7 L28.0 66.4 L28.3 66.1 L28.6 65.8 L28.9 65.5 L29.1 65.2 L29.4 64.9 L29.7 64.7 L29.9 64.5 L30.2 64.3 L30.5 64.1 L30.7 64.0 L31.0 64.0 L31.3 64.0 L31.6 64.0 L31.8 64.0 L32.1 64.0 L32.4 64.0 L32.7 64.1 L32.9 64.2 L33.2 64.3 L33.5 64.4 L33.7 64.7 L34.0 64.9 L34.3 65.3 L34.6 65.7 L34.8 66.2 L35.1 66.8 L35.4 67.5 L35.7 68.3 L36.0 69.2 L36.3 70.2 L36.6 71.4 L36.9 72.6 L37.2 73.8 L37.6 75.2 L37.9 76.6 L38.2 78.1 L38.5 79.7 L38.8 81.3 L39.2 82.9 L39.5 84.6 L39.8 86.4 L40.2 88.2 L40.5 89.9 L40.9 91.8 L41.2 93.7 L41.6 95.7 L41.9 97.9 L42.3 100.2 L42.7 102.5 L43.1 104.9 L43.5 107.4 L43.9 109.8 L44.2 112.2 L44.6 114.6 L45.0 116.9 L45.4 119.1 L45.7 121.2 L46.1 123.2 L46.4 125.0 L46.8 126.6 L47.1 128.1 L47.4 129.4 L47.7 130.6 L48.1 131.8 L48.4 132.8 L48.7 133.8 L49.0 134.7 L49.3 135.5 L49.6 136.2 L49.9 136.9 L50.2 137.5 L50.4 138.1 L50.6 138.6 L50.8 139.1 L51.0 139.6 L51.2 140.0 L51.2 140.0 L52.3 134.6 L53.4 129.4 L54.4 124.3 L55.5 119.4 L56.5 114.6 L57.5 110.0 L58.5 105.5 L59.4 101.1 L60.3 97.0 L61.3 93.0 L62.2 89.1 L63.1 85.4 L63.9 82.0 L64.8 78.7 L65.6 75.5 L66.5 72.6 L67.3 69.9 L68.1 67.5 L68.9 65.2 L69.7 63.2 L70.5 61.5 L71.3 60.1 L72.2 59.1 L73.3 58.6 L74.3 59.1 L75.2 60.1 L76.0 61.5 L76.8 63.2 L77.6 65.2 L78.4 67.5 L79.2 69.9 L80.0 72.6 L80.9 75.5 L81.7 78.7 L82.6 82.0 L83.5 85.4 L84.3 89.1 L85.2 93.0 L86.2 97.0 L87.1 101.1 L88.1 105.5 L89.0 110.0 L90.0 114.6 L91.1 119.4 L92.1 124.3 L93.1 129.4 L94.2 134.6 L95.3 140.0 M110.1 140.0 L110.8 135.6 L111.5 131.3 L112.2 127.1 L112.9 123.0 L113.6 119.1 L114.3 115.3 L114.9 111.6 L115.6 108.0 L116.2 104.6 L116.8 101.3 L117.4 98.1 L118.0 95.1 L118.6 92.2 L119.2 89.5 L119.7 86.9 L120.3 84.6 L120.8 82.3 L121.4 80.3 L121.9 78.4 L122.4 76.8 L123.0 75.4 L123.5 74.3 L124.1 73.4 L124.8 73.0 L125.5 73.4 L126.1 74.3 L126.6 75.4 L127.1 76.8 L127.7 78.4 L128.2 80.3 L128.8 82.3 L129.3 84.6 L129.9 86.9 L130.4 89.5 L131.0 92.2 L131.6 95.1 L132.2 98.1 L132.8 101.3 L133.4 104.6 L134.0 108.0 L134.7 111.6 L135.3 115.3 L136.0 119.1 L136.7 123.0 L137.3 127.1 L138.1 131.3 L138.8 135.6 L139.5 140.0 M154.2 140.0 L155.0 135.6 L155.7 131.3 L156.4 127.1 L157.1 123.0 L157.8 119.1 L158.4 115.3 L159.1 111.6 L159.7 108.0 L160.4 104.6 L161.0 101.3 L161.6 98.1 L162.2 95.1 L162.8 92.2 L163.3 89.5 L163.9 86.9 L164.4 84.6 L165.0 82.3 L165.5 80.3 L166.1 78.4 L166.6 76.8 L167.1 75.4 L167.7 74.3 L168.3 73.4 L169.0 73.0 L169.7 73.4 L170.2 74.3 L170.8 75.4 L171.3 76.8 L171.9 78.4 L172.4 80.3 L172.9 82.3 L173.5 84.6 L174.0 86.9 L174.6 89.5 L175.2 92.2 L175.8 95.1 L176.4 98.1 L177.0 101.3 L177.6 104.6 L178.2 108.0 L178.8 111.6 L179.5 115.3 L180.1 119.1 L180.8 123.0 L181.5 127.1 L182.2 131.3 L182.9 135.6 L183.7 140.0 M213.1 140.0 L213.9 135.6 L214.6 131.3 L215.3 127.1 L216.0 123.0 L216.7 119.1 L217.3 115.3 L218.0 111.6 L218.6 108.0 L219.3 104.6 L219.9 101.3 L220.5 98.1 L221.1 95.1 L221.6 92.2 L222.2 89.5 L222.8 86.9 L223.3 84.6 L223.9 82.3 L224.4 80.3 L225.0 78.4 L225.5 76.8 L226.0 75.4 L226.6 74.3 L227.1 73.4 L227.9 73.0 L228.6 73.4 L229.1 74.3 L229.7 75.4 L230.2 76.8 L230.8 78.4 L231.3 80.3 L231.8 82.3 L232.4 84.6 L232.9 86.9 L233.5 89.5 L234.1 92.2 L234.7 95.1 L235.2 98.1 L235.9 101.3 L236.5 104.6 L237.1 108.0 L237.7 111.6 L238.4 115.3 L239.0 119.1 L239.7 123.0 L240.4 127.1 L241.1 131.3 L241.8 135.6 L242.6 140.0 M272.0 140.0 L272.8 135.6 L273.5 131.3 L274.2 127.1 L274.9 123.0 L275.6 119.1 L276.2 115.3 L276.9 111.6 L277.5 108.0 L278.1 104.6 L278.8 101.3 L279.4 98.1 L280.0 95.1 L280.5 92.2 L281.1 89.5 L281.7 86.9 L282.2 84.6 L282.8 82.3 L283.3 80.3 L283.9 78.4 L284.4 76.8 L284.9 75.4 L285.5 74.3 L286.0 73.4 L286.8 73.0 L287.5 73.4 L288.0 74.3 L288.6 75.4 L289.1 76.8 L289.6 78.4 L290.2 80.3 L290.7 82.3 L291.3 84.6 L291.8 86.9 L292.4 89.5 L293.0 92.2 L293.6 95.1 L294.1 98.1 L294.7 101.3 L295.4 104.6 L296.0 108.0 L296.6 111.6 L297.3 115.3 L297.9 119.1 L298.6 123.0 L299.3 127.1 L300.0 131.3 L300.7 135.6 L301.5 140.0 M301.5 140.0 L302.2 135.5 L302.9 131.2 L303.7 127.0 L304.3 122.9 L305.0 118.9 L305.7 115.0 L306.3 111.3 L307.0 107.7 L307.6 104.2 L308.2 100.9 L308.8 97.7 L309.4 94.7 L310.0 91.8 L310.6 89.0 L311.1 86.4 L311.7 84.0 L312.2 81.8 L312.8 79.7 L313.3 77.8 L313.8 76.2 L314.4 74.8 L314.9 73.6 L315.5 72.7 L316.2 72.3 L316.9 72.7 L317.5 73.6 L318.0 74.8 L318.6 76.2 L319.1 77.8 L319.6 79.7 L320.2 81.8 L320.7 84.0 L321.3 86.4 L321.8 89.0 L322.4 91.8 L323.0 94.7 L323.6 97.7 L324.2 100.9 L324.8 104.2 L325.4 107.7 L326.1 111.3 L326.7 115.0 L327.4 118.9 L328.1 122.9 L328.8 127.0 L329.5 131.2 L330.2 135.5 L330.9 140.0 M345.7 140.0 L346.4 135.5 L347.1 131.2 L347.8 127.0 L348.5 122.9 L349.2 118.9 L349.9 115.0 L350.5 111.3 L351.1 107.7 L351.8 104.2 L352.4 100.9 L353.0 97.7 L353.6 94.7 L354.2 91.8 L354.7 89.0 L355.3 86.4 L355.9 84.0 L356.4 81.8 L356.9 79.7 L357.5 77.8 L358.0 76.2 L358.6 74.8 L359.1 73.6 L359.7 72.7 L360.4 72.3 L361.1 72.7 L361.7 73.6 L362.2 74.8 L362.7 76.2 L363.3 77.8 L363.8 79.7 L364.3 81.8 L364.9 84.0 L365.5 86.4 L366.0 89.0 L366.6 91.8 L367.2 94.7 L367.8 97.7 L368.4 100.9 L369.0 104.2 L369.6 107.7 L370.2 111.3 L370.9 115.0 L371.6 118.9 L372.2 122.9 L372.9 127.0 L373.6 131.2 L374.4 135.5 L375.1 140.0 M375.1 140.0 L375.8 135.6 L376.6 131.3 L377.3 127.1 L378.0 123.0 L378.6 119.1 L379.3 115.3 L380.0 111.6 L380.6 108.0 L381.2 104.6 L381.8 101.3 L382.4 98.1 L383.0 95.1 L383.6 92.2 L384.2 89.5 L384.7 86.9 L385.3 84.6 L385.9 82.3 L386.4 80.3 L386.9 78.4 L387.5 76.8 L388.0 75.4 L388.5 74.3 L389.1 73.4 L389.8 73.0 L390.5 73.4 L391.1 74.3 L391.6 75.4 L392.2 76.8 L392.7 78.4 L393.3 80.3 L393.8 82.3 L394.3 84.6 L394.9 86.9 L395.5 89.5 L396.0 92.2 L396.6 95.1 L397.2 98.1 L397.8 101.3 L398.4 104.6 L399.1 108.0 L399.7 111.6 L400.3 115.3 L401.0 119.1 L401.7 123.0 L402.4 127.1 L403.1 131.3 L403.8 135.6 L404.5 140.0 M404.5 140.0 L405.3 135.5 L406.0 131.0 L406.7 126.7 L407.4 122.5 L408.1 118.5 L408.8 114.5 L409.4 110.7 L410.0 107.1 L410.7 103.5 L411.3 100.1 L411.9 96.9 L412.5 93.8 L413.1 90.8 L413.6 88.0 L414.2 85.4 L414.8 82.9 L415.3 80.6 L415.8 78.5 L416.4 76.6 L416.9 74.9 L417.4 73.5 L418.0 72.3 L418.6 71.4 L419.3 71.0 L420.0 71.4 L420.6 72.3 L421.1 73.5 L421.6 74.9 L422.2 76.6 L422.7 78.5 L423.2 80.6 L423.8 82.9 L424.3 85.4 L424.9 88.0 L425.5 90.8 L426.1 93.8 L426.7 96.9 L427.3 100.1 L427.9 103.5 L428.5 107.1 L429.1 110.7 L429.8 114.5 L430.5 118.5 L431.1 122.5 L431.8 126.7 L432.5 131.0 L433.3 135.5 L434.0 140.0" fill="none" stroke="#c4c4f0" stroke-width="4" transform="translate(0.5 1.2)" opacity="0.5" stroke-linejoin="round"/>
<path d="M7.0 73.0 L7.2 73.1 L7.4 73.2 L7.7 73.4 L7.9 73.5 L8.3 73.7 L8.6 73.9 L8.9 74.1 L9.3 74.3 L9.7 74.5 L10.0 74.7 L10.4 74.9 L10.8 75.1 L11.2 75.3 L11.5 75.4 L11.8 75.6 L12.2 75.7 L12.4 75.8 L12.7 75.9 L13.0 76.0 L13.3 76.1 L13.6 76.2 L13.8 76.3 L14.1 76.3 L14.4 76.4 L14.6 76.4 L14.9 76.5 L15.2 76.5 L15.4 76.5 L15.7 76.5 L16.0 76.5 L16.3 76.4 L16.6 76.4 L16.9 76.3 L17.2 76.1 L17.5 76.0 L17.8 75.8 L18.1 75.7 L18.4 75.5 L18.8 75.3 L19.1 75.1 L19.4 74.8 L19.8 74.6 L20.1 74.3 L20.4 74.1 L20.7 73.8 L21.1 73.5 L21.4 73.3 L21.7 73.0 L22.0 72.7 L22.4 72.4 L22.7 72.1 L23.0 71.8 L23.4 71.4 L23.7 71.1 L24.0 70.7 L24.3 70.3 L24.7 70.0 L25.0 69.6 L25.3 69.3 L25.6 68.9 L26.0 68.6 L26.3 68.2 L26.6 67.9 L26.9 67.6 L27.2 67.3 L27.5 67.0 L27.8 66.7 L28.0 66.4 L28.3 66.1 L28.6 65.8 L28.9 65.5 L29.1 65.2 L29.4 64.9 L29.7 64.7 L29.9 64.5 L30.2 64.3 L30.5 64.1 L30.7 64.0 L31.0 64.0 L31.3 64.0 L31.6 64.0 L31.8 64.0 L32.1 64.0 L32.4 64.0 L32.7 64.1 L32.9 64.2 L33.2 64.3 L33.5 64.4 L33.7 64.7 L34.0 64.9 L34.3 65.3 L34.6 65.7 L34.8 66.2 L35.1 66.8 L35.4 67.5 L35.7 68.3 L36.0 69.2 L36.3 70.2 L36.6 71.4 L36.9 72.6 L37.2 73.8 L37.6 75.2 L37.9 76.6 L38.2 78.1 L38.5 79.7 L38.8 81.3 L39.2 82.9 L39.5 84.6 L39.8 86.4 L40.2 88.2 L40.5 89.9 L40.9 91.8 L41.2 93.7 L41.6 95.7 L41.9 97.9 L42.3 100.2 L42.7 102.5 L43.1 104.9 L43.5 107.4 L43.9 109.8 L44.2 112.2 L44.6 114.6 L45.0 116.9 L45.4 119.1 L45.7 121.2 L46.1 123.2 L46.4 125.0 L46.8 126.6 L47.1 128.1 L47.4 129.4 L47.7 130.6 L48.1 131.8 L48.4 132.8 L48.7 133.8 L49.0 134.7 L49.3 135.5 L49.6 136.2 L49.9 136.9 L50.2 137.5 L50.4 138.1 L50.6 138.6 L50.8 139.1 L51.0 139.6 L51.2 140.0 L51.2 140.0 L52.3 134.6 L53.4 129.4 L54.4 124.3 L55.5 119.4 L56.5 114.6 L57.5 110.0 L58.5 105.5 L59.4 101.1 L60.3 97.0 L61.3 93.0 L62.2 89.1 L63.1 85.4 L63.9 82.0 L64.8 78.7 L65.6 75.5 L66.5 72.6 L67.3 69.9 L68.1 67.5 L68.9 65.2 L69.7 63.2 L70.5 61.5 L71.3 60.1 L72.2 59.1 L73.3 58.6 L74.3 59.1 L75.2 60.1 L76.0 61.5 L76.8 63.2 L77.6 65.2 L78.4 67.5 L79.2 69.9 L80.0 72.6 L80.9 75.5 L81.7 78.7 L82.6 82.0 L83.5 85.4 L84.3 89.1 L85.2 93.0 L86.2 97.0 L87.1 101.1 L88.1 105.5 L89.0 110.0 L90.0 114.6 L91.1 119.4 L92.1 124.3 L93.1 129.4 L94.2 134.6 L95.3 140.0 M110.1 140.0 L110.8 135.6 L111.5 131.3 L112.2 127.1 L112.9 123.0 L113.6 119.1 L114.3 115.3 L114.9 111.6 L115.6 108.0 L116.2 104.6 L116.8 101.3 L117.4 98.1 L118.0 95.1 L118.6 92.2 L119.2 89.5 L119.7 86.9 L120.3 84.6 L120.8 82.3 L121.4 80.3 L121.9 78.4 L122.4 76.8 L123.0 75.4 L123.5 74.3 L124.1 73.4 L124.8 73.0 L125.5 73.4 L126.1 74.3 L126.6 75.4 L127.1 76.8 L127.7 78.4 L128.2 80.3 L128.8 82.3 L129.3 84.6 L129.9 86.9 L130.4 89.5 L131.0 92.2 L131.6 95.1 L132.2 98.1 L132.8 101.3 L133.4 104.6 L134.0 108.0 L134.7 111.6 L135.3 115.3 L136.0 119.1 L136.7 123.0 L137.3 127.1 L138.1 131.3 L138.8 135.6 L139.5 140.0 M154.2 140.0 L155.0 135.6 L155.7 131.3 L156.4 127.1 L157.1 123.0 L157.8 119.1 L158.4 115.3 L159.1 111.6 L159.7 108.0 L160.4 104.6 L161.0 101.3 L161.6 98.1 L162.2 95.1 L162.8 92.2 L163.3 89.5 L163.9 86.9 L164.4 84.6 L165.0 82.3 L165.5 80.3 L166.1 78.4 L166.6 76.8 L167.1 75.4 L167.7 74.3 L168.3 73.4 L169.0 73.0 L169.7 73.4 L170.2 74.3 L170.8 75.4 L171.3 76.8 L171.9 78.4 L172.4 80.3 L172.9 82.3 L173.5 84.6 L174.0 86.9 L174.6 89.5 L175.2 92.2 L175.8 95.1 L176.4 98.1 L177.0 101.3 L177.6 104.6 L178.2 108.0 L178.8 111.6 L179.5 115.3 L180.1 119.1 L180.8 123.0 L181.5 127.1 L182.2 131.3 L182.9 135.6 L183.7 140.0 M213.1 140.0 L213.9 135.6 L214.6 131.3 L215.3 127.1 L216.0 123.0 L216.7 119.1 L217.3 115.3 L218.0 111.6 L218.6 108.0 L219.3 104.6 L219.9 101.3 L220.5 98.1 L221.1 95.1 L221.6 92.2 L222.2 89.5 L222.8 86.9 L223.3 84.6 L223.9 82.3 L224.4 80.3 L225.0 78.4 L225.5 76.8 L226.0 75.4 L226.6 74.3 L227.1 73.4 L227.9 73.0 L228.6 73.4 L229.1 74.3 L229.7 75.4 L230.2 76.8 L230.8 78.4 L231.3 80.3 L231.8 82.3 L232.4 84.6 L232.9 86.9 L233.5 89.5 L234.1 92.2 L234.7 95.1 L235.2 98.1 L235.9 101.3 L236.5 104.6 L237.1 108.0 L237.7 111.6 L238.4 115.3 L239.0 119.1 L239.7 123.0 L240.4 127.1 L241.1 131.3 L241.8 135.6 L242.6 140.0 M272.0 140.0 L272.8 135.6 L273.5 131.3 L274.2 127.1 L274.9 123.0 L275.6 119.1 L276.2 115.3 L276.9 111.6 L277.5 108.0 L278.1 104.6 L278.8 101.3 L279.4 98.1 L280.0 95.1 L280.5 92.2 L281.1 89.5 L281.7 86.9 L282.2 84.6 L282.8 82.3 L283.3 80.3 L283.9 78.4 L284.4 76.8 L284.9 75.4 L285.5 74.3 L286.0 73.4 L286.8 73.0 L287.5 73.4 L288.0 74.3 L288.6 75.4 L289.1 76.8 L289.6 78.4 L290.2 80.3 L290.7 82.3 L291.3 84.6 L291.8 86.9 L292.4 89.5 L293.0 92.2 L293.6 95.1 L294.1 98.1 L294.7 101.3 L295.4 104.6 L296.0 108.0 L296.6 111.6 L297.3 115.3 L297.9 119.1 L298.6 123.0 L299.3 127.1 L300.0 131.3 L300.7 135.6 L301.5 140.0 M301.5 140.0 L302.2 135.5 L302.9 131.2 L303.7 127.0 L304.3 122.9 L305.0 118.9 L305.7 115.0 L306.3 111.3 L307.0 107.7 L307.6 104.2 L308.2 100.9 L308.8 97.7 L309.4 94.7 L310.0 91.8 L310.6 89.0 L311.1 86.4 L311.7 84.0 L312.2 81.8 L312.8 79.7 L313.3 77.8 L313.8 76.2 L314.4 74.8 L314.9 73.6 L315.5 72.7 L316.2 72.3 L316.9 72.7 L317.5 73.6 L318.0 74.8 L318.6 76.2 L319.1 77.8 L319.6 79.7 L320.2 81.8 L320.7 84.0 L321.3 86.4 L321.8 89.0 L322.4 91.8 L323.0 94.7 L323.6 97.7 L324.2 100.9 L324.8 104.2 L325.4 107.7 L326.1 111.3 L326.7 115.0 L327.4 118.9 L328.1 122.9 L328.8 127.0 L329.5 131.2 L330.2 135.5 L330.9 140.0 M345.7 140.0 L346.4 135.5 L347.1 131.2 L347.8 127.0 L348.5 122.9 L349.2 118.9 L349.9 115.0 L350.5 111.3 L351.1 107.7 L351.8 104.2 L352.4 100.9 L353.0 97.7 L353.6 94.7 L354.2 91.8 L354.7 89.0 L355.3 86.4 L355.9 84.0 L356.4 81.8 L356.9 79.7 L357.5 77.8 L358.0 76.2 L358.6 74.8 L359.1 73.6 L359.7 72.7 L360.4 72.3 L361.1 72.7 L361.7 73.6 L362.2 74.8 L362.7 76.2 L363.3 77.8 L363.8 79.7 L364.3 81.8 L364.9 84.0 L365.5 86.4 L366.0 89.0 L366.6 91.8 L367.2 94.7 L367.8 97.7 L368.4 100.9 L369.0 104.2 L369.6 107.7 L370.2 111.3 L370.9 115.0 L371.6 118.9 L372.2 122.9 L372.9 127.0 L373.6 131.2 L374.4 135.5 L375.1 140.0 M375.1 140.0 L375.8 135.6 L376.6 131.3 L377.3 127.1 L378.0 123.0 L378.6 119.1 L379.3 115.3 L380.0 111.6 L380.6 108.0 L381.2 104.6 L381.8 101.3 L382.4 98.1 L383.0 95.1 L383.6 92.2 L384.2 89.5 L384.7 86.9 L385.3 84.6 L385.9 82.3 L386.4 80.3 L386.9 78.4 L387.5 76.8 L388.0 75.4 L388.5 74.3 L389.1 73.4 L389.8 73.0 L390.5 73.4 L391.1 74.3 L391.6 75.4 L392.2 76.8 L392.7 78.4 L393.3 80.3 L393.8 82.3 L394.3 84.6 L394.9 86.9 L395.5 89.5 L396.0 92.2 L396.6 95.1 L397.2 98.1 L397.8 101.3 L398.4 104.6 L399.1 108.0 L399.7 111.6 L400.3 115.3 L401.0 119.1 L401.7 123.0 L402.4 127.1 L403.1 131.3 L403.8 135.6 L404.5 140.0 M404.5 140.0 L405.3 135.5 L406.0 131.0 L406.7 126.7 L407.4 122.5 L408.1 118.5 L408.8 114.5 L409.4 110.7 L410.0 107.1 L410.7 103.5 L411.3 100.1 L411.9 96.9 L412.5 93.8 L413.1 90.8 L413.6 88.0 L414.2 85.4 L414.8 82.9 L415.3 80.6 L415.8 78.5 L416.4 76.6 L416.9 74.9 L417.4 73.5 L418.0 72.3 L418.6 71.4 L419.3 71.0 L420.0 71.4 L420.6 72.3 L421.1 73.5 L421.6 74.9 L422.2 76.6 L422.7 78.5 L423.2 80.6 L423.8 82.9 L424.3 85.4 L424.9 88.0 L425.5 90.8 L426.1 93.8 L426.7 96.9 L427.3 100.1 L427.9 103.5 L428.5 107.1 L429.1 110.7 L429.8 114.5 L430.5 118.5 L431.1 122.5 L431.8 126.7 L432.5 131.0 L433.3 135.5 L434.0 140.0" fill="none" stroke="#0707c8" stroke-width="2.2" stroke-linejoin="round"/>
</svg>
<div class="bx" style="left:956px;width:47.5px;border-radius:3px 0 0 3px;background:#e6e6e6;border-color:#adadad;box-shadow:inset 0 3px 5px rgba(0,0,0,.125)">30 sec</div>
<div class="bx" style="left:1002.5px;width:42px;">5 min</div>
<div class="bx" style="left:1043.5px;width:31px;border-radius:0 3px 3px 0">1 hr</div>
<svg class="abs" style="left:1080px;top:720px" width="13" height="13" viewBox="0 0 13 13"><path d="M2 2 L11 11 M11 2 L2 11" stroke="#222" stroke-width="3" fill="none"/></svg>
<div class="abs" style="left:111px;top:905px;font-size:12px;line-height:16px;color:#333">Copyright 2014-2017 Netonix</div>
</div>
<div id="frame"></div>
</body>
</html>
